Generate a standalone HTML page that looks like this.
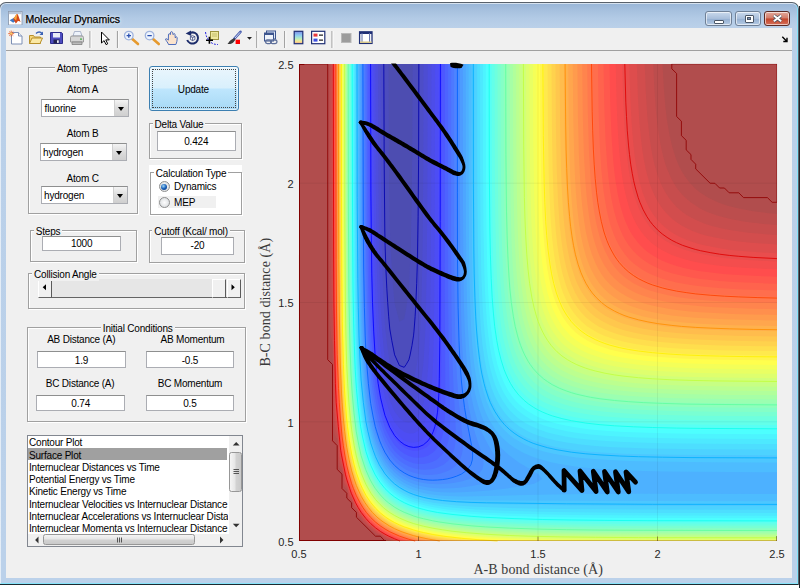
<!DOCTYPE html><html><head><meta charset="utf-8"><title>Molecular Dynamics</title><style>
*{box-sizing:border-box;margin:0;padding:0}
html,body{width:800px;height:588px;overflow:hidden;background:#fff}
body{position:relative;font-family:"Liberation Sans",sans-serif;font-size:10px;letter-spacing:-0.2px;color:#000}
.abs{position:absolute}
#win{position:absolute;left:-1px;top:2px;width:800px;height:583px;border:1px solid #59616b;border-bottom-color:#1c2a30;border-radius:7px 7px 1px 1px;background:linear-gradient(#98b5d7 0px,#a6c0de 7px,#b2cae5 15px,#bad0e9 24px,#bbd1ea 100%);overflow:hidden}
#win:before{content:"";position:absolute;left:0;top:0;right:0;bottom:0;border:1px solid rgba(255,255,255,.6);border-right-color:#86e4fa;border-bottom-color:#86e4fa;border-radius:6px 6px 0 0}
#title{position:absolute;left:25.500px;top:7.600px;font-size:10.5px;letter-spacing:0;line-height:16px;color:#000;-webkit-text-stroke:.25px #000;text-shadow:0 0 5px rgba(255,255,255,.9),0 0 3px rgba(255,255,255,.7)}
#client{position:absolute;left:6px;top:25px;width:786px;height:550px;background:#f0f0f0}
#tb{position:absolute;left:0;top:0;width:786px;height:22.500px;background:#f0f0f0;border-bottom:1px solid #a0a0a0}
.sep{position:absolute;top:4px;width:1px;height:16px;background:#a5a5a5}
.wb{position:absolute;top:7.500px;height:15px;border:1px solid #6f8096;border-radius:3px;box-shadow:inset 0 0 0 1px rgba(255,255,255,.6)}
.panel{position:absolute;border:1px solid #a0a0a0;box-shadow:1px 1px 0 #fff,inset 1px 1px 0 #fff}
.t{position:absolute;line-height:12px;white-space:nowrap}
.lbl{position:absolute;text-align:center;line-height:13px;white-space:nowrap}
.edit{position:absolute;background:#fff;border:1px solid #abadb3;border-top-color:#8e8f8f;text-align:center;white-space:nowrap}
.pop{position:absolute;background:#fff;border:1px solid #abadb3;border-top-color:#8e8f8f;padding-left:4px;white-space:nowrap}
.pop i{position:absolute;right:0;top:0;bottom:0;width:14px;background:linear-gradient(#f4f4f4,#dcdcdc 50%,#cfcfcf);border-left:1px solid #d0d0d0}
.pop i:after{content:"";position:absolute;left:3px;top:7px;border:3.500px solid transparent;border-top:4px solid #000;border-bottom:none}
.radio{position:absolute;border-radius:50%;border:1px solid #8e8f8f;background:radial-gradient(circle at 50% 50%,#fdfdfd 0,#e4e6e8 60%,#cfd3d6 100%)}
.li{position:absolute;left:1px;height:12.36px;line-height:12.36px;white-space:nowrap;padding-left:1px}
</style></head><body><div class="abs" style="left:799px;top:6px;width:1px;height:582px;background:#20242a"></div><div id="win"><svg class="abs" style="left:8px;top:7.500px" width="14.500" height="14.500" viewBox="0 0 16 16"><rect x=".5" y=".5" width="15" height="15" fill="#fff" stroke="#8d9bb0"/><rect x="1" y="1" width="14" height="2.500" fill="#b9c7da"/><path d="M1.800 10.300l4.400-2.500 2.800 2.700-3.300 2.500z" fill="#3f78c4"/><path d="M6.200 7.800c1.700-1.500 2.800-4.600 3.900-4.600 1.300 0 2.700 6.200 3.900 9-1.600-.9-2.800-1.600-3.500-.6-.7.900-1.300 1.700-2 2.200-.6-1.600-1.400-2.700-2.300-3.800z" fill="#d4481a"/><path d="M10.100 3.200c-.9 0-2 3.100-3.900 4.600l2.800 2.700c.5-2.200 1.100-5.300 1.100-7.300z" fill="#f5a83a"/></svg><div id="title">Molecular Dynamics</div><div class="wb" style="left:705px;width:26.500px;background:linear-gradient(#c9d9ec,#a9bfdb 50%,#93aed0 51%,#b5cbe4)"><div class="abs" style="left:8px;top:8px;width:10px;height:4px;background:#fff;border:1px solid #4a5666;border-radius:1px"></div></div><div class="wb" style="left:734.500px;width:26px;background:linear-gradient(#c9d9ec,#a9bfdb 50%,#93aed0 51%,#b5cbe4)"><div class="abs" style="left:9px;top:3px;width:9px;height:8px;background:#fff;border:1px solid #4a5666;border-radius:1px"><div class="abs" style="left:1.500px;top:1.500px;width:4px;height:3px;background:#7d94b5;border:1px solid #4a5666"></div></div></div><div class="wb" style="left:763.500px;width:26.500px;border-color:#5b2b25;background:linear-gradient(#e3a99b,#d27b68 48%,#c2452b 52%,#d6705a)"><svg class="abs" style="left:7.500px;top:2.500px" width="12" height="10"><path d="M1.800 1.500l7.400 5.800M9.200 1.500l-7.400 5.800" stroke="#4a4f5c" stroke-width="3.400"/><path d="M1.800 1.500l7.400 5.800M9.200 1.500l-7.400 5.800" stroke="#fff" stroke-width="2"/></svg></div><div id="client"><svg class="abs" style="left:0;top:0;letter-spacing:0" width="786" height="550" viewBox="6 28 786 550"><g shape-rendering="geometricPrecision"><rect x="299" y="64" width="478" height="477" fill="#4d4db1"/>
<path fill="#4d4dbc" d="M300.2 541l476.8 0 0-477 -364.3 0 -0.4 81.1 -0.6 57.2 -0.9 43 -1.4 33.3 -0.5 8.7 -1.2 10.4 -1.3 9.6 -2.2 11.7 -4.8 2.7 -4.8-18.1 -1.4-15.4 -1.1-14.3 -1.8-33.4 -0.5-14.3 -0.7-47.7 -0.6-114.5 -89.5 0 0 477 1.2 0z"/>
<path fill="#4d4dc7" d="M300.2 541l476.8 0 0-477 -358.3 0 -0.2 86.2 -0.6 66.4 -0.8 47.7 -1.4 38.2 -0.8 14.3 -1.1 14.3 -2.1 14.3 -1.4 7.2 -1.4 6 -2.4 4.2 -2.3 3.5 -4.8-1.6 -4.8-10.9 -2.6-13.1 -2.2-13.1 -2-25.1 -1.7-33.4 -1.1-33.4 -0.7-66.8 -0.4-104.9 -84.9 0 0 477 1.2 0z"/>
<path fill="#4d4dd2" d="M300.2 541l476.8 0 0-477 -353.5 0 -0.2 100.2 -0.6 76.3 -1 52.5 -0.6 19 -1 19.1 -0.9 14.3 -0.9 9.6 -2.2 14.3 -2.1 9.5 -1.9 4.8 -3.2 5.8 -4.7 2.3 -4.8-2.9 -4.8-8.5 -0.4-1.5 -4.4-15.6 -2.6-17.8 -2.2-18.9 -1.1-19.2 -0.9-19.1 -0.7-23.9 -0.7-28.6 -0.7-66.8 -0.4-104.9 -81.5 0 0 477 1.2 0z"/>
<path fill="#4d4dde" d="M300.2 541l476.8 0 0-477 -349.3 0 -0.3 124 -0.6 76.3 -1 52.5 -0.7 19.1 -1.1 19.1 -0.7 9.8 -1.8 14 -1.7 9.6 -1.3 5.3 -0.7 1.8 -3.1 7.2 -1 1.8 -0.5 0.6 -2.6 2.3 -1.7 1.3 -4.7 0.2 -4.8-3.4 -4.8-7.4 -4.8-13.1 -2.3-11 -2.5-13.1 -1.6-15.5 -1.3-14.3 -1.8-30.5 -0.8-26.7 -0.6-28.6 -0.6-71.6 -0.3-109.7 -79 0 0 477 1.2 0z"/>
<path fill="#4d4de9" d="M300.2 541l476.8 0 0-477 -345.5 0 -0.3 133.6 -0.5 81 -0.9 52.5 -0.7 19.1 -0.9 17.9 -1.3 14.3 -1.4 10.7 -1.9 9.6 -1.4 4.7 -2.5 6 -1.2 2.4 -0.9 1.2 -3.9 4 -4.8 1.7 -4.7-1 -4.8-3.6 -4.8-6.6 -4.8-10.9 -2.1-7.5 -2.7-10.8 -2.6-17.8 -2.1-18.5 -1.3-19.6 -1.1-23.9 -0.8-23.9 -0.6-28.6 -0.7-71.5 -0.3-114.5 -76.5 0 0 477 1.2 0z"/>
<path fill="#4d4df4" d="M300.2 541l476.8 0 0-477 -341.9 0 -0.3 143.1 -0.5 90.6 -0.8 52.5 -0.7 19.1 -0.8 14.3 -1.4 14.3 -1.5 9.5 -1 4.8 -0.7 2.4 -2.6 7.2 -1.5 3.1 -1.1 1.6 -3.7 4.2 -4.8 2.5 -4.8 0.3 -4.7-1.6 -4.8-3.6 -4.8-6.1 -4.8-9.5 -4.7-14.8 -1-4.8 -3.4-19.1 -1.6-14.3 -1.6-19 -1.4-23.9 -0.6-14.3 -0.7-28.6 -0.5-33.4 -0.4-42.9 -0.3-133.6 -74.6 0 0 477 1.2 0z"/>
<path fill="#4d4dff" d="M300.2 541l476.8 0 0-477 -338.4 0 -0.3 150.3 -0.4 102.5 -0.6 47.7 -0.4 14.3 -0.7 14.3 -1.3 14.3 -1.4 9.6 -1.9 7.1 -0.7 2.4 -2 4.8 -0.8 1.5 -2.3 3.3 -2.5 2.7 -3.1 2 -1.7 1 -4.8 1 -4.8-0.5 -4.7-1.9 -4.8-3.7 -4.8-5.6 -4.8-8.5 -4.8-12.9 -2.8-11.8 -1.9-9.2 -2.6-19.4 -1.8-19.1 -1-14.3 -1.2-28.6 -0.8-33.4 -0.5-33.4 -0.4-42.9 -0.4-133.6 -72.6 0 0 477 1.2 0z"/>
<path fill="#4d58ff" d="M300.2 541l476.8 0 0-477 -335.2 0 -0.5 295.7 -0.3 28.7 -0.8 19 -0.8 9.6 -1.6 9.5 -1.2 4.8 -0.8 2.4 -0.9 2.4 -2.1 4.1 -2.2 3 -2.1 2.4 -1.6 1.3 -3.6 2.2 -4.8 1.5 -4.8 0.1 -4.8-1 -4.7-2.2 -4.8-3.6 -4.8-5.3 -4.8-7.7 -4.8-11.3 -2.1-7.4 -2.5-9.5 -2.4-14.3 -2.5-18.6 -1.6-19.6 -1.3-23.8 -1-28.7 -0.7-28.6 -0.7-71.5 -0.3-133.6 -70.9 0 0 477 1.2 0z"/>
<path fill="#4d63ff" d="M300.2 541l476.8 0 0-477 -332 0 -0.2 224.2 0.5 104.9 -0.1 14.3 -0.4 10.8 -0.8 8.3 -0.6 4.8 -1 4.8 -1.5 4.7 -2.1 4.5 -1.2 2 -2.4 3.1 -1.2 1.2 -1.3 1.2 -3.6 2.3 -1 0.6 -4.8 1.5 -4.8 0.6 -4.8-0.4 -4.8-1.3 -4.7-2.4 -4.8-3.5 -4.8-5 -4.8-7.2 -4.8-10.1 -4.7-15.3 -3-14.7 -1.8-11.1 -2.3-22.3 -1.7-23.8 -0.8-15.7 -0.9-32 -0.6-38.2 -0.4-42.9 -0.4-147.9 -69.4 0 0 477 1.2 0z"/>
<path fill="#4d6eff" d="M300.2 541l476.8 0 0-477 -328.9 0 0 229 0.6 57.2 1.4 62 0 9.6 -0.4 9.5 -0.5 4.8 -0.6 3.5 -1.5 6 -2 4.8 -3.2 4.7 -4.3 4 -1.2 0.8 -3.6 1.8 -4.7 1.6 -4.8 0.7 -4.8-0.1 -4.8-0.7 -4.8-1.6 -4.7-2.4 -4.8-3.4 -5.3-5.4 -4.3-6.1 -4.8-9.2 -1.4-3.8 -3.3-9.7 -3.3-14.2 -1.8-9.5 -2.4-19.1 -2.1-22.8 -1.2-24.9 -1-28.6 -0.7-38.2 -0.5-47.7 -0.4-152.6 -67.9 0 0 477 1.2 0z"/>
<path fill="#4d79ff" d="M300.2 541l476.8 0 0-477 -325.8 0 -0.1 171.7 0.4 76.3 0.5 32.2 0.8 25.1 0.8 19.1 2.1 38.1 0.1 9.6 -0.2 4.7 -0.6 4.8 -0.6 3 -0.5 1.8 -1.3 3.5 -0.6 1.5 -2.2 3.3 -0.9 1.2 -1.7 1.8 -3.8 3 -5.8 2.8 -4.8 1.4 -2.4 0.4 -2.3 0.3 -4.8 0.1 -4.8-0.4 -4.8-1.1 -4.8-1.6 -4.7-2.5 -4.8-3.4 -4.8-4.6 -4.8-6.2 -4.8-8.5 -4.7-12.2 -2.1-7.4 -2.7-11.4 -2.7-17.3 -2.1-17 -1.5-21.1 -1.4-28.6 -1-33.4 -0.6-33.4 -0.3-38.2 -0.4-157.4 -66.5 0 0 477 1.2 0z"/>
<path fill="#4d84ff" d="M300.2 541l476.8 0 0-477 -322.9 0 0.1 181.3 0.3 47.7 0.5 33.4 0.8 28.6 1.2 22.6 1.8 23.9 3.6 34.6 0.4 9.5 -0.2 4.8 -0.9 4.7 -1.7 4.8 -3.2 4.8 -2.4 2.2 -2.4 1.9 -1.2 0.7 -3.6 1.8 -6 2 -3.6 0.9 -2.4 0.3 -2.4 0.3 -4.7 0.1 -4.8-0.2 -4.8-0.7 -4.8-1.2 -4.8-1.8 -3-1.6 -1.7-0.8 -5.5-3.9 -4.1-3.9 -4.8-5.8 -4.8-8 -4.7-11.1 -2.9-9.4 -1.9-7.2 -2.3-11.9 -1.5-9.5 -1-7 -1.2-12.1 -1.8-23.8 -1.4-28.6 -0.7-23.9 -0.6-38.2 -0.4-47.7 -0.3-152.6 -65.3 0 0 477 1.2 0z"/>
<path fill="#4d8fff" d="M300.2 541l476.8 0 0-477 -319.9 0 0 128.8 0.2 66.8 0.5 47.7 0.9 33.4 1.4 28.6 1.1 13.1 1.1 10.7 1.3 10.8 1.6 10.7 5.6 31 0.6 4.8 0.2 4.7 -0.4 4.8 -1.5 4.8 -3.5 4.7 -4.8 3.6 -2 1.2 -3.9 1.6 -3.5 1.2 -4.8 1.3 -4.8 0.8 -4.8 0.5 -4.8 0.1 -4.7-0.1 -4.8-0.5 -4.8-0.9 -4.8-1.3 -4.8-1.9 -4.7-2.4 -4.8-3.2 -4.8-4.3 -4.8-5.6 -4.8-7.4 -0.8-1.7 -3.9-8.6 -2-5.7 -2.9-9.6 -2.1-9.5 -2.6-14.3 -2.2-19.1 -1.9-23.9 -1.1-19 -1-33.4 -0.7-38.2 -0.4-47.7 -0.4-157.4 -64 0 0 477 1.2 0z"/>
<path fill="#4d9bff" d="M300.2 541l476.8 0 0-477 -317 0 0 133.6 0.3 66.7 0.8 48.9 0.6 21.5 0.9 16.7 1.2 17.9 1.3 13.1 1.5 11.9 2 11.9 2.5 11.9 2.5 9.6 2.1 7.2 6.6 20.2 1 4.8 0.2 4.8 -1.2 4.7 -3.9 4.8 -3.9 2.4 -4.8 2.4 -8.2 2.4 -8.3 1.7 -6 0.7 -9.6 0.4 -4.8-0.1 -4.7-0.3 -4.8-0.8 -4.8-1 -4.8-1.4 -4.8-1.8 -4.7-2.5 -4.8-3.2 -4.8-4.1 -4.8-5.3 -4.8-7 -4.7-9.6 -4.8-13.6 -2.9-11.7 -1.9-9.5 -2.6-19.2 -2.2-22.4 -1.4-25.3 -1.1-33.4 -0.7-38.1 -0.5-47.7 -0.4-162.2 -62.8 0 0 477 1.2 0z"/>
<path fill="#4da6ff" d="M300.2 541l476.8 0 0-477 -314.1 0 0.1 143.1 0.5 71.5 0.5 28.7 0.8 22.6 1.1 20.3 1.2 15.5 1.8 15.5 2.2 14.3 2.8 13.1 2 7.2 1.5 4.8 3.2 8.9 4.7 10.1 4.9 8.9 7.3 11.4 2.6 4.8 1.8 4.7 -0.6 4.8 -2.7 2.9 -2.2 1.9 -5 2.1 -7.2 2.5 -10.7 2.2 -12 1.7 -9.5 0.8 -9.6 0.2 -9.6-0.5 -4.7-0.6 -4.8-0.8 -4.8-1.1 -4.8-1.5 -4.8-1.9 -4.7-2.4 -4.8-3.1 -4.8-4 -4.8-5.1 -4.8-6.6 -4.7-8.9 -4.8-12.5 -2.3-8.2 -2.5-10.8 -2.8-17.8 -2.2-19.1 -1.9-28.6 -1.5-38.2 -0.8-38.2 -0.4-42.9 -0.4-171.7 -61.7 0 0 477 1.2 0z"/>
<path fill="#4db1ff" d="M300.2 541l476.8 0 0-477 -311.2 0 0.1 157.4 0.4 42.9 0.6 33.4 0.9 28.7 1.5 23.8 1.9 19.1 1.2 9.5 1.6 9.6 1.8 8.3 1.5 6 2.1 7.4 2.5 6.9 3 7.1 2.4 4.8 2.9 5 3.9 5.7 3.3 4.1 3.8 4.3 4.5 4.3 4.8 4 8.4 6.1 3.9 2.3 4.4 2.9 3.8 1.8 3.4 2.5 4.3 2.3 1.7 2.5 2 2.3 -3.2 2.1 -5.1 2.7 -12.8 2.4 -14.1 2.3 -18.2 1.9 -13.1 1.1 -14.4 0.8 -9.5 0.2 -9.6-0.3 -9.6-0.8 -9.5-1.6 -4.8-1.1 -4.8-1.5 -4.8-1.9 -4.7-2.4 -5.9-3.9 -3.7-3 -4.8-4.9 -4.8-6.3 -4.7-8.4 -4.8-11.6 -2.6-8.7 -2.2-8.4 -2-10.7 -1.5-9.6 -1.3-9 -1-10 -2-28.7 -1-19 -0.6-19.1 -0.8-38.2 -0.4-47.7 -0.4-171.7 -60.7 0 0 477 1.2 0z"/>
<path fill="#4dbcff" d="M300.2 541l476.8 0 0-47.1 -138.6-0.1 -52.6 0.2 -47.8 0.7 -62.1 1.6 -14.4 0.1 -14.3-0.5 -9.6-0.7 -9.5-1.3 -4.8-1 -4.8-1.3 -4.8-1.5 -4.8-1.9 -4.7-2.4 -4.8-2.9 -4.8-3.7 -4.8-4.7 -4.8-6.1 -5-8.5 -4.5-10.2 -4.2-13.6 -1.2-4.8 -1.9-9.5 -2.3-13.5 -1.7-15.2 -1.2-14.3 -1.3-19.1 -0.9-19 -0.8-28.7 -0.5-28.6 -0.6-81.1 -0.2-138.3 -59.7 0 0 477 1.2 0zM696.9 471.8l80.1 0.4 0-408.2 -308.4 0 0.1 119.2 0.3 66.8 0.9 47.7 0.7 19.1 0.7 14.3 1 14.3 1.5 15.5 1.8 13.1 2.2 12 2.5 10.7 2.7 8.7 3.1 8 4.1 8.2 4.8 7.6 4.8 5.9 3.5 3.7 3.6 3.3 2.4 1.9 4.8 3.5 9.6 5.4 8.3 3.6 6 2.1 11.9 3.4 7.2 1.5 17.9 3 10.8 1.2 14.3 1.2 23.9 1.3 19.2 0.7 23.9 0.6 29.8 0.3z"/>
<path fill="#4dc7ff" d="M300.2 541l476.8 0 0-39.8 -129.1-0.1 -157.7-0.7 -23.9-0.3 -14.3-0.6 -9.6-0.8 -9.6-1.2 -9.5-1.9 -4.8-1.2 -4.8-1.5 -4.8-2 -4.7-2.3 -4.8-2.9 -4.8-3.6 -4.8-4.6 -4.8-5.8 -4.7-7.5 -4.8-10.1 -4.8-14.5 -2.9-13.1 -1.9-9.7 -2.3-18.9 -1.8-19.1 -1.2-19.1 -0.9-23.8 -0.8-28.6 -0.5-28.7 -0.5-81 -0.2-133.6 -58.7 0 0 477 1.2 0zM711.3 462.3l65.7 0.2 0-398.5 -305.5 0 0.1 114.5 0.3 66.8 0.9 47.7 0.7 19 0.9 16.7 1.3 16.7 1.6 14.3 1.8 12 2.1 10.7 2.7 10.7 2.8 8.4 3.5 8.2 3.9 7.3 4.9 7.1 5.2 6 5.1 4.6 4.8 3.7 2 1.2 7.6 4.4 9.5 4.1 9.6 3.1 9.5 2.3 14.4 2.6 9.5 1.3 14.4 1.4 19.1 1.3 19.1 0.8 23.9 0.7 58.6 0.7z"/>
<path fill="#4dd2ff" d="M300.2 541l476.8 0 0-34.9 -124.3-0.2 -81.2-0.5 -76.5-1.2 -23.9-0.7 -14.4-0.7 -14.3-1.3 -9.6-1.3 -9.5-1.9 -4.8-1.3 -4.8-1.6 -5.3-2.1 -4.2-2.1 -4.8-2.8 -4.8-3.6 -4.8-4.4 -1.3-1.4 -4-4.8 -4.2-6.5 -1.6-3 -3.2-6.5 -4.8-13.5 -3.3-13.4 -1.9-9.5 -2.6-19.1 -1.8-17.6 -1.2-20.6 -1.1-23.8 -0.8-28.7 -0.5-28.6 -0.6-81.1 -0.3-138.3 -57.6 0 0 477 1.2 0zM702.9 455.1l74.1 0.3 0-391.4 -302.7 0 0.1 114.5 0.4 62 0.9 47.7 0.7 19.1 0.8 14.3 1 14.3 1.5 14.3 1.8 13.1 1.9 10.7 2.3 9.6 2.9 9.5 3.3 8.4 3.6 7.1 4.3 6.8 5.1 6.4 3.5 3.5 2.7 2.4 3 2.4 4.8 3.3 7.2 4 7.1 3.1 9.6 3.3 9.5 2.4 9.6 2 11.9 1.7 16.8 1.8 14.3 1.1 19.1 0.9 19.2 0.6 28.6 0.5 31.1 0.3z"/>
<path fill="#4ddeff" d="M300.2 541l476.8 0 0-31.2 -133.8-0.2 -81.3-0.6 -33.5-0.6 -32.1-0.8 -20.4-0.9 -19.2-1.2 -14.3-1.4 -9.6-1.4 -9.5-2 -9.6-2.8 -4.8-2 -4.7-2.2 -4.8-2.8 -4.8-3.4 -4.2-3.7 -4.4-4.8 -1-1.1 -4.7-6.9 -4.8-9.1 -4.5-11.5 -1.4-4.8 -3.5-14.3 -1.7-9.5 -2.6-19.1 -0.7-5.7 -1.1-13.4 -1.1-19.1 -1.1-23.8 -0.8-28.7 -0.5-28.6 -0.5-76.3 -0.2-143.1 -56.8 0 0 477 1.2 0zM702.9 449.2l74.1 0.3 0-385.5 -299.8 0 0.1 109.7 0.4 62 0.9 47.7 0.7 19.1 0.9 15.5 0.9 13.1 1.5 14.3 2 14.3 1.8 9.6 2.3 9.5 3 9.6 3.3 8.2 4.4 8.5 5.1 7.4 4.8 5.4 5.6 5 4 3 2.8 1.8 6.7 3.8 4.8 2.2 4.8 1.8 9.6 3 8.3 2 10.8 2.1 11.9 1.7 16.8 1.6 14.3 1 19.1 0.9 19.1 0.6 55 0.8z"/>
<path fill="#4de9ff" d="M300.2 541l476.8 0 0-27.9 -129.1-0.2 -76.4-0.6 -33.5-0.6 -33.5-1 -28.6-1.3 -19.2-1.3 -14.3-1.6 -14.3-2.4 -4.8-1.1 -4.8-1.3 -9.6-3.4 -4.7-2.3 -4.8-2.7 -4.8-3.4 -4.8-4.1 -4.8-5.2 -4.7-6.5 -4.8-8.6 -4.8-11.8 -3.7-12.9 -1.1-4.4 -1-5.1 -3.1-19.1 -1.1-9.5 -1.6-19.1 -1.2-19.1 -1.1-23.8 -0.5-19.1 -0.6-33.4 -0.6-81.1 -0.2-143.1 -55.9 0 0 477 1.2 0zM662.3 443.2l47.8 0.6 66.9 0.3 0-380.1 -296.9 0 0.1 104.9 0.3 62.1 0.8 42.9 1.4 33.4 0.9 14.3 1.4 14.3 1.6 13.2 1.8 10.6 2 9.6 2.7 9.5 2.4 7.2 3.1 7.1 2.4 4.5 2.3 3.9 4.2 5.9 1.8 2.3 3.6 3.7 5.4 4.8 6.6 4.5 3.5 2 4.8 2.4 6 2.5 8.4 2.8 9.5 2.4 9.6 1.9 9.5 1.5 14.4 1.6 15.5 1.3 17.9 1 38.3 1.1z"/>
<path fill="#4df4ff" d="M300.2 541l476.8 0 0-25.2 -129.1-0.2 -76.4-0.6 -33.5-0.7 -28.7-0.8 -26.4-1.1 -16.6-1.2 -19.1-1.8 -12.4-1.8 -11.5-2.5 -9.6-2.8 -4.8-1.9 -4.7-2.2 -4.8-2.7 -4.8-3.2 -4.5-3.8 -5.1-5.2 -4.7-6.3 -4.8-8.2 -4.8-11.2 -2.3-7.2 -2.5-8.8 -2.9-15.1 -1.9-11.3 -1.8-17.3 -1.2-14.3 -1.2-19.1 -0.8-19.1 -0.8-28.6 -0.4-28.6 -0.6-81.1 -0.2-143.1 -55.1 0 0 477 1.2 0zM683.8 438.5l40.6 0.3 52.6 0.2 0-375 -294.1 0 0.1 100.2 0.4 63.2 1 46.5 0.7 19.1 0.8 14.3 1 14.3 1.5 14.3 1.8 13 2 10.8 2.4 9.6 2.8 8.9 2.4 6.2 3.6 7.5 1.3 2.4 3.1 4.8 1.7 2.4 3 3.6 2.2 2.3 3.8 3.6 5.2 4.1 5.9 3.7 3.6 1.9 4.8 2.3 4.8 1.9 4.8 1.6 8.3 2.3 10.8 2.4 9.5 1.6 14.4 1.7 14.3 1.2 14.4 0.9 19.1 0.9 45.4 1z"/>
<path fill="#4dffff" d="M300.2 541l476.8 0 0-22.7 -138.6-0.3 -43-0.2 -38.3-0.5 -28.7-0.7 -23.9-0.9 -23.9-1.3 -19.1-1.3 -14.3-1.6 -14.4-2.2 -9.5-2.1 -9.6-2.9 -4.8-1.8 -4.7-2.2 -4.8-2.6 -6.3-4.4 -3.3-2.7 -4.8-4.8 -5.2-6.8 -4.3-7.1 -1.2-2.5 -3.6-8.1 -2.1-6.2 -2.7-8.8 -2.3-10.2 -2.6-14.3 -2.2-19.1 -1.7-19.1 -0.9-14.3 -1.1-28.6 -0.7-28.7 -0.4-28.6 -0.6-81.1 -0.2-138.3 -54.2 0 0 477 1.2 0zM689.8 433.7l87.2 0.5 0-370.2 -291.2 0 0.1 100.2 0.5 62 0.9 42.9 0.7 19.1 0.8 14.3 1 14.3 1.5 14.3 2 14.3 1.8 9.6 2.3 9.5 3 9.5 3.5 8.4 3 6 2.4 4 2.2 3.1 2.6 3.4 2.3 2.6 2.5 2.5 3.6 3.2 5.1 3.8 5.9 3.6 4.5 2.3 4.8 2.1 8.3 2.9 7.2 2 8.4 1.9 14.3 2.4 9.6 1.2 14.3 1.3 19.1 1.2 16.8 0.7 21.5 0.6 27.5 0.5z"/>
<path fill="#58fff4" d="M300.2 541l476.8 0 0-20.5 -129.1-0.2 -76.4-0.6 -28.7-0.6 -28.7-0.8 -25.6-1.1 -17.4-1.3 -19.1-1.8 -13-1.7 -10.9-2.1 -10.4-2.7 -8.8-3.1 -4.7-2.2 -4.8-2.6 -4.8-3.1 -4.3-3.3 -5.3-5.1 -4.7-5.9 -5.1-8.1 -4.5-9.4 -4.8-14.1 -3.4-14.6 -1.7-9.6 -2.5-19.1 -1.9-21.1 -1.2-21.8 -0.9-23.8 -0.7-28.7 -0.5-28.6 -0.5-81.1 -0.2-138.3 -53.4 0 0 477 1.2 0zM682.6 428.9l41.8 0.4 52.6 0.3 0-365.6 -288.3 0 0.2 100.2 0.4 57.2 0.9 42.9 0.7 19.1 0.8 14.3 1 14.3 1.5 14.4 1.8 13.1 2 10.7 2.3 9.5 3 9.6 2.4 6.2 3.6 7.4 4.8 7.6 4 5 5.6 5.6 4.7 3.9 6 3.9 3.6 1.9 4.8 2.3 4.8 2 4.7 1.7 7.2 2.1 10.8 2.4 10.7 1.9 9.6 1.2 14.3 1.5 14.4 1 19.1 0.9 19.1 0.6 25.1 0.5z"/>
<path fill="#63ffe9" d="M300.2 541l476.8 0 0-18.4 -133.8-0.2 -71.7-0.6 -28.7-0.6 -28.7-0.9 -23.9-1.1 -23.9-1.7 -9.6-0.9 -9.5-1.2 -14.4-2.3 -9.5-2.1 -9.6-2.8 -4.8-1.8 -4.7-2.2 -4.8-2.5 -5.6-3.6 -4-3.1 -4.8-4.6 -4.7-5.6 -4.8-7.3 -4.8-9.5 -4.8-13.3 -3.4-13.9 -1.9-9.5 -2.1-14.3 -2.1-19.3 -1.3-18.9 -1.2-23.8 -0.9-28.6 -0.6-33.4 -0.6-81.1 -0.3-147.9 -52.5 0 0 477 1.2 0zM670.6 424.2l44.3 0.6 62.1 0.3 0-361.1 -285.4 0 0.2 95.4 0.4 57.2 0.9 43 0.7 19 0.8 14.4 1 14.3 1.1 10.7 1.6 13.1 1.6 9.6 2 9.5 2.6 9.5 3 8.4 2.5 5.9 4.1 7.6 4.7 6.8 4.9 5.5 4.7 4.3 6.2 4.5 3.4 2.1 4.8 2.5 6 2.6 8.3 2.9 9.6 2.6 9.5 2 9.6 1.6 14.3 1.7 14.4 1.2 14.3 0.8 19.1 0.9 22.7 0.6z"/>
<path fill="#6effde" d="M300.2 541l476.8 0 0-16.6 -148.2-0.2 -43-0.4 -38.2-0.6 -28.7-0.8 -23.9-1 -23.9-1.7 -14.4-1.3 -9.5-1.1 -14.4-2.4 -9.5-2.1 -4.8-1.3 -9.6-3.3 -4.7-2.1 -4.8-2.5 -4.8-3 -4.8-3.6 -4.8-4.4 -4.7-5.5 -5.5-8.1 -4.1-8 -4.8-12.5 -3.4-12.9 -2-9.5 -2.9-19.1 -1.2-10 -0.8-9.1 -1.4-19.1 -1.1-23.8 -0.9-28.6 -0.6-32.1 -0.6-82.4 -0.2-147.9 -51.8 0 0 477 1.2 0zM749.5 420.6l27.5 0.1 0-356.7 -282.4 0 0.2 100.2 0.5 57.2 1.1 42.9 0.8 19.1 1 14.3 1.2 14.3 1.8 14.4 1.6 9.5 2.3 10.7 2.3 8.4 1.5 4.7 1.8 4.8 3.4 7.5 4.8 8.1 4.8 6.2 4.7 5 3.6 3 3.2 2.4 2.8 1.9 4.8 2.8 4.8 2.3 4.7 2.1 7.2 2.5 10.8 2.9 10.7 2.1 9.6 1.5 14.3 1.6 14.4 1.2 19.1 1.1 19.1 0.7 23.9 0.5 68.1 0.7z"/>
<path fill="#79ffd2" d="M300.2 541l476.8 0 0-14.7 -143.4-0.3 -43-0.3 -38.3-0.6 -33.4-1 -28.7-1.3 -19.1-1.3 -19.1-2 -14.4-2 -9.5-1.9 -9.6-2.4 -4.8-1.5 -4.8-1.8 -5.3-2.3 -4.2-2.2 -4.8-2.9 -4.8-3.5 -6.1-5.7 -4.1-4.8 -4.1-5.8 -2.1-3.7 -2.7-5.1 -3.8-9.2 -1.6-4.8 -4.2-15.4 -2.4-13.2 -2.3-16.3 -1.6-17.1 -1.4-19.1 -1.1-23.8 -0.7-20.2 -0.6-32.3 -0.7-85.9 -0.2-152.6 -51.1 0 0 477 1.2 0zM696.9 415.8l80.1 0.5 0-352.3 -279.5 0 0.2 90.6 0.5 57.3 0.9 42.9 0.8 19.1 0.9 14.3 1.1 14.3 1.6 14.3 1.4 9.6 2.3 11.9 2.1 8.8 2.5 7.9 3.2 8.3 3.9 7.7 4.8 7.3 4.4 5.3 5.1 4.9 6 4.6 3.6 2.3 3.6 2 5.9 2.8 4.8 1.9 4.8 1.7 9.6 2.6 9.5 2.1 10.8 1.7 13.1 1.6 14.4 1.3 14.3 0.9 19.1 0.8 44.2 1z"/>
<path fill="#84ffc7" d="M300.2 541l476.8 0 0-13.1 -143.4-0.2 -43-0.3 -38.3-0.6 -28.6-0.8 -23.9-1 -23.9-1.5 -19.2-1.7 -14.3-2 -14.3-2.5 -9.6-2.5 -4.8-1.5 -4.8-1.7 -8.7-4 -5.6-3.3 -4.8-3.5 -3.2-2.7 -4.8-4.8 -1.5-1.8 -4.8-6.5 -4.8-8.4 -4.8-11.3 -3.1-10.2 -2.4-9.5 -1.8-9.5 -1.6-9.6 -1.7-14.3 -1.7-19.1 -1.3-19.1 -0.8-19 -0.8-28.6 -0.5-28.7 -0.6-81.1 -0.2-152.6 -50.4 0 0 477 1.2 0zM673 411l41.9 0.7 62.1 0.4 0-348.1 -276.5 0 0.2 85.9 0.5 57.2 0.9 42.9 1.4 29.8 1 13.2 1.4 14.3 1.6 11.9 1.8 10.8 2.5 10.7 2.3 8 2.3 6.3 3.1 7.1 4.2 7.5 4.7 6.7 4.8 5.2 4.8 4.2 5.3 3.9 4.3 2.5 3.5 1.9 6 2.7 9.6 3.3 9.5 2.6 9.6 1.9 9.6 1.5 14.3 1.7 14.3 1.2 14.4 0.9 34.6 1.2z"/>
<path fill="#8fffbc" d="M300.2 541l476.8 0 0-11.5 -143.4-0.3 -43-0.3 -38.3-0.6 -28.6-0.7 -23.9-0.9 -23.9-1.6 -23.9-2.4 -6.4-0.8 -8-1.3 -14.3-2.9 -9.6-2.8 -6.8-2.5 -2.7-1.2 -7-3.6 -7.2-4.8 -5-4.2 -4.7-5 -4.8-6.3 -4.9-8.3 -4.7-10.6 -2.7-8.5 -2.1-7 -2.5-12.1 -2.2-12.5 -2-16.1 -1.7-19.1 -1.1-17.8 -0.8-20.3 -0.8-28.6 -0.6-33.4 -0.5-81.1 -0.2-147.9 -49.7 0 0 477 1.2 0zM716.1 407.5l60.9 0.3 0-343.8 -273.4 0 0.2 90.6 0.5 57.3 1 38.1 0.9 19.1 0.9 14.3 1.2 14.3 1.6 13.1 1.7 10.8 2.2 10.7 2.2 8.4 3.2 9.5 2 4.8 2.3 4.7 2.7 4.8 4.1 6 2.9 3.5 2.4 2.5 2.4 2.4 4.2 3.5 5.4 3.7 5.9 3.3 8.4 3.7 9.6 3.2 9.5 2.4 9.6 1.9 10.7 1.6 13.2 1.5 14.3 1.1 19.1 1.1 19.2 0.7 49 0.9z"/>
<path fill="#9bffb1" d="M300.2 541l476.8 0 0-10 -143.4-0.2 -43-0.4 -33.5-0.4 -33.4-0.9 -28.7-1.2 -19.1-1.3 -19.2-1.8 -14.3-1.9 -9.6-1.6 -14.3-3.4 -4.8-1.5 -4.8-1.7 -5.6-2.3 -3.9-2 -5-2.8 -6.5-4.8 -2.9-2.4 -4.7-4.9 -5.4-7 -4.2-6.9 -1.3-2.6 -3.5-7.7 -2.3-6.6 -2.5-8 -2.5-11.1 -2.6-14.3 -2.4-19.1 -1.7-19.1 -1.1-19.1 -0.9-23.8 -0.7-28.6 -0.5-28.6 -0.5-81.1 -0.2-147.9 -49 0 0 477 1.2 0zM683.8 402.7l40.6 0.6 52.6 0.3 0-339.6 -270.4 0 0.2 85.9 0.5 52.4 0.9 38.2 0.8 19.1 0.8 14.3 1.1 14.3 1.4 13.1 1.5 10.7 1.7 9.6 2.1 9.5 2.8 9.6 3.3 8.7 2.6 5.6 2.6 4.7 4.3 6.4 4.8 5.6 5.1 4.7 3.3 2.5 3.3 2.3 2.6 1.7 4.8 2.5 6.6 3 7.8 2.7 9.5 2.7 9.6 2 9.5 1.6 14.4 1.7 14.3 1.3 14.4 0.9 19.1 0.8 21.5 0.6z"/>
<path fill="#a6ffa6" d="M300.2 541l476.8 0 0-8.6 -143.4-0.2 -43-0.3 -34-0.4 -28.2-0.8 -23.9-0.9 -23.9-1.4 -20.1-1.7 -13.3-1.7 -14.4-2.3 -9.5-2.1 -11.8-3.4 -7.3-2.9 -4.1-1.9 -5.5-3.1 -4.8-3.2 -4-3.3 -5.5-5.3 -4.8-6 -4.9-7.7 -4.7-9.7 -4.8-13.9 -3.4-14.6 -1.8-9.5 -2.5-19.1 -1.8-18.1 -1.2-20.1 -1.1-23.8 -0.7-28.6 -0.5-28.7 -0.6-81.1 -0.2-152.6 -48.3 0 0 477 1.2 0zM726.8 399.1l50.2 0.3 0-335.4 -267.3 0 0.3 85.9 0.6 57.2 1.1 38.2 0.9 19 1 14.3 1.3 14.4 1.7 13.1 1.9 10.7 2.1 9.6 2.7 9.5 3.1 8.3 2.7 6 4.1 7.2 4.8 6.6 4.8 5.1 5.8 4.9 3.7 2.7 3.5 2.1 6.1 3.2 4.8 2.1 4.8 1.8 9.5 2.9 7.2 1.7 11.9 2.2 9.6 1.3 14.3 1.5 14.4 1.1 19.1 1 19.1 0.6 50.2 0.9z"/>
<path fill="#b1ff9b" d="M300.2 541l476.8 0 0-7.3 -143.4-0.2 -43-0.3 -38.3-0.5 -28.6-0.7 -23.9-1 -23.9-1.6 -19.2-1.8 -14.3-1.9 -14.3-2.6 -9.6-2.4 -9.6-3 -4.7-2 -4.8-2.2 -4.8-2.7 -4.8-3.1 -4.8-3.8 -4.7-4.6 -5-6 -4.6-7.1 -1.3-2.4 -3.5-7.2 -4.8-13.1 -3.3-13.1 -1.9-9.6 -2.8-19 -1.9-19.1 -1.3-19.1 -1.1-23.9 -0.8-28.6 -0.6-33.4 -0.6-76.3 -0.2-157.4 -47.6 0 0 477 1.2 0zM692.2 394.3l37 0.6 47.8 0.3 0-331.2 -264.1 0 0.2 81.1 0.5 52.5 1 38.1 0.8 19.1 0.9 14.3 1.2 14.3 1.4 12 1.8 11.9 1.8 9.5 2.4 9.6 2.6 8.3 2.3 6 3.4 7.1 4.4 7.2 4 5.2 5.2 5.5 5.5 4.6 5.7 3.7 3.9 2.3 4.8 2.3 6.6 2.6 7.7 2.5 9.6 2.4 9.5 1.9 9.6 1.4 14.3 1.6 14.4 1.2 14.3 0.8 19.1 0.8 20.4 0.5z"/>
<path fill="#bcff8f" d="M300.2 541l476.8 0 0-5.9 -143.4-0.3 -43-0.3 -33.5-0.4 -28.7-0.7 -28.6-1.1 -19.2-1.2 -19.1-1.7 -19.1-2.3 -9.6-1.7 -14.3-3.3 -9.6-3.1 -4.9-1.8 -9.4-4.8 -7-4.8 -2.6-2.1 -4.7-4.5 -4.8-5.6 -4.8-7 -4.8-9.2 -4.8-12.6 -1.8-6.7 -2.4-9.5 -1.8-9.6 -2.8-19 -0.7-6.3 -1.1-12.8 -1.3-19.1 -1.1-23.9 -0.7-23.8 -0.6-28.6 -0.6-85.9 -0.2-157.4 -47 0 0 477 1.2 0zM740 390.8l37 0.2 0-327 -260.9 0 0.3 85.9 0.6 52.4 0.6 23.9 0.8 19.1 0.8 14.3 1 14.3 1.5 14.3 2 13.7 1.9 10.1 2.3 9.6 2.6 8.3 2.7 7 4.2 8.5 3 4.8 3.5 4.8 3.7 4.1 1.9 1.8 2.8 2.6 2.8 2.2 6.8 4.6 7.4 3.7 6.9 2.9 9.6 3 9.6 2.3 9.5 1.8 14.4 2 14.3 1.4 14.3 1 19.2 0.9 19.1 0.6 53.8 0.9z"/>
<path fill="#c7ff84" d="M300.2 541l476.8 0 0-4.6 -133.8-0.2 -76.5-0.7 -28.7-0.6 -28.7-1 -23.9-1.2 -19.1-1.5 -19.1-2.2 -14.4-2.3 -9.5-2.1 -10-2.7 -9.1-3.4 -4.8-2.1 -4.8-2.6 -4.8-3 -4.2-3.2 -5.3-4.8 -4.8-5.5 -2.9-4 -3-4.8 -3.7-7 -4.8-12.1 -2.7-9.5 -2-8 -2.1-11.1 -2.7-18.6 -1.8-19.5 -1.3-19.1 -1.1-23.9 -0.6-19 -0.6-33.4 -0.6-85.9 -0.2-157.4 -46.4 0 0 477 1.2 0zM702.9 386l31.1 0.4 43 0.3 0-322.7 -257.7 0 0.3 76.3 0.6 52.5 1 38.2 0.9 19 0.9 14.3 1.2 13.2 1.3 10.7 1.4 9.5 2.1 10.8 2 8.3 3 9.6 3.9 9.5 2.5 4.8 2.9 4.7 4.4 6 4.6 5 3.8 3.3 3.4 2.6 2.4 1.7 3.6 2.2 6 3.1 4.7 2.1 4.8 1.8 8.4 2.6 10.7 2.5 9.6 1.7 9.6 1.4 14.3 1.5 14.3 1.1 14.4 0.7 19.1 0.8 21.5 0.5z"/>
<path fill="#d2ff79" d="M300.2 541l476.8 0 0-3.5 -143.4-0.2 -76.5-0.7 -23.9-0.5 -28.7-1.1 -23.9-1.4 -19.1-1.6 -9.5-1.1 -9.6-1.4 -14.3-2.5 -9.6-2.3 -9.6-3 -9.5-4 -4.8-2.5 -4.6-2.8 -5-3.7 -4.7-4.3 -1.5-1.6 -3.3-3.7 -4.2-5.8 -5.4-9.4 -4.8-11.7 -2.3-7.5 -2.5-9.6 -1.9-9.5 -1.7-9.5 -1.9-14.3 -1.7-19.1 -1.3-19.1 -1-21.5 -0.7-26.2 -0.6-33.4 -0.6-85.9 -0.1-152.6 -45.8 0 0 477 1.2 0zM765.1 382.4l11.9 0.1 0-318.5 -254.4 0 0.3 81.1 0.7 52.5 1.3 38.1 1.1 19.1 1.1 14.3 1.6 14.3 2.1 13.1 2.2 10.8 2.6 9.5 3.3 9.6 3.3 7.1 4.1 7.2 3.4 4.7 4.1 4.8 3.3 3.3 3.2 2.7 6.4 4.5 6.9 3.8 7.4 3.2 9.6 3.2 9.5 2.5 9.6 1.8 9.6 1.5 14.3 1.6 14.3 1.2 19.2 1.1 19.1 0.7 22.7 0.5 56.2 0.6z"/>
<path fill="#deff6e" d="M300.2 541l476.8 0 0-2.3 -138.6-0.2 -76.5-0.7 -28.7-0.6 -28.4-1 -19.4-1.1 -19.1-1.5 -19.1-2.1 -14.4-2.4 -11.5-2.4 -12.4-3.7 -4.7-1.8 -4.8-2.2 -4.8-2.4 -4.8-3 -4.8-3.5 -2.9-2.5 -4.8-4.8 -1.8-2 -4.8-6.5 -4.8-8.3 -4.8-11.1 -3.2-10.2 -1.5-5.6 -0.9-4 -1.9-9.5 -1.7-9.5 -1.7-14.3 -1.8-19.1 -1.3-19.1 -0.8-19.1 -0.8-28.6 -0.6-33.4 -0.6-85.9 -0.2-152.6 -45.1 0 0 477 1.2 0zM720.8 377.6l56.2 0.6 0-314.2 -251 0 0.3 76.3 0.7 52.5 1.2 38.2 0.8 14.3 1 14.3 1.5 14.3 1.7 12.9 2 10.9 2.2 9.6 3 9.5 2.4 6.4 3.8 7.9 2.8 4.8 3.3 4.8 4.4 5.2 4.8 4.5 4.8 3.7 2.4 1.6 6.9 4 6.2 2.8 8.4 3.1 9.5 2.7 9.6 2 10.8 1.8 13.1 1.6 14.3 1.3 14.4 0.9 19.1 0.8 39.4 0.9z"/>
<path fill="#e9ff63" d="M300.2 541l476.8 0 0-1.2 -148.2-0.2 -43-0.4 -33.5-0.5 -28.6-0.7 -23.9-0.9 -15.6-0.9 -17.9-1.4 -14.3-1.6 -14.4-2 -9.5-1.8 -9.6-2.2 -9.6-3 -4.7-1.8 -4.8-2.1 -4.8-2.4 -4.8-2.9 -4.8-3.4 -4.6-4 -4.6-4.8 -5.1-6.7 -4.8-8 -4.8-10.7 -2.6-8 -2.1-7.1 -2.7-11.9 -2.5-14.3 -2.2-19.1 -1.6-19.1 -1.1-19.1 -0.9-23.8 -0.7-28.6 -0.4-28.7 -0.6-81.1 -0.2-152.6 -44.5 0 0 477 1.2 0zM701.7 372.9l32.3 0.5 43 0.4 0-309.8 -247.6 0 0.3 71.5 0.6 47.7 1.1 38.2 0.8 15.5 1 15.7 1.1 11.7 1.8 14.3 1.5 9.6 2 9.5 2.5 9.6 1.9 5.7 3.4 8.6 3 5.9 2.9 4.8 4.4 6 4.2 4.6 2.7 2.5 3.3 2.7 3.6 2.6 2.3 1.5 7.2 3.9 7.2 3.1 7.2 2.5 9.5 2.6 9.6 1.9 9.5 1.6 12.4 1.5 16.3 1.4 14.4 0.9 34.6 1.3z"/>
<path fill="#f4ff58" d="M300.2 541l476.8 0 -138.6-0.3 -71.7-0.6 -28.7-0.6 -23.9-0.7 -23.9-1.2 -20.6-1.4 -17.6-1.9 -19.2-2.8 -14.3-3.2 -4.8-1.3 -4.8-1.6 -9.5-3.8 -4.8-2.4 -4.8-2.8 -4.8-3.4 -4.7-4 -4.8-5 -4.8-6.1 -2.9-4.6 -2.7-4.8 -4.3-9.5 -4.4-13.6 -2.5-10.3 -2.7-14.3 -2.4-19 -2-22.1 -1.1-20.9 -0.9-23.8 -0.7-28.6 -0.4-28.7 -0.6-81.1 -0.2-152.6 -43.9 0 0 477 1.2 0zM759.1 369.3l17.9 0.1 0-305.4 -244.1 0 0.3 76.3 0.9 52.5 0.6 19.1 0.9 19.1 0.9 14.3 1.2 14.3 1.8 14.3 1.6 9.5 1.9 9.6 2.5 9.5 3.2 9.5 3.2 7.2 3.9 7.2 3.2 4.7 3.9 4.8 4.8 4.8 6 4.7 7.3 4.6 7.2 3.4 7.2 2.7 9.5 2.9 9.6 2.2 9.5 1.6 14.4 1.9 14.3 1.4 14.4 0.9 19.1 0.9 19.1 0.6 53.8 0.8z"/>
<path fill="#ffff4d" d="M300.2 541l253.1 0 -29.6-0.8 -23.9-1 -19.2-1.1 -19.1-1.6 -14.3-1.7 -14.4-2.2 -9.5-2 -9.6-2.5 -4.8-1.5 -4.7-1.8 -6.7-2.9 -7.7-4.2 -4.8-3.3 -2.4-2 -2.3-2 -4.8-4.8 -4.8-6 -4.8-7.6 -4-8.2 -1.9-4.8 -3.6-10.7 -3.2-13.2 -1.9-9.5 -2.1-14.3 -2-19.1 -1.1-14.3 -1-19.1 -0.8-19.1 -0.6-23.8 -0.8-57.3 -0.4-81 -0.2-133.6 -43.3 0 0 477 1.2 0zM734 364.5l43 0.4 0-300.9 -240.6 0 0.4 71.5 0.7 47.7 0.5 19.1 0.8 19.1 0.9 14.3 1.1 14.3 1.6 14.3 1.3 9.6 1.8 9.5 2.1 9.6 2.9 9.5 2.6 7.2 3.4 7.1 4.2 7.1 1.6 2.5 3.9 4.7 4.7 4.8 5.3 4.4 4.8 3.2 4.8 2.7 4.8 2.2 4.2 1.8 6.5 2.3 8.9 2.5 9.1 1.9 14.3 2.4 9.6 1.1 14.3 1.3 14.3 0.9 19.2 0.9 43 1z"/>
<path fill="#fff44d" d="M300.2 541l214.9 0 -20.1-1 -19.1-1.2 -14.4-1.2 -14.3-1.7 -14.4-2.3 -9.5-1.9 -9.6-2.5 -9.5-3.2 -9.2-4.1 -5.2-3 -4.8-3.2 -4.1-3.3 -5-4.8 -5.2-6.3 -4.8-7.4 -4.8-9.6 -2-5.3 -2.7-8 -2.9-11.1 -2.1-9.5 -2.2-14.3 -1.8-14.3 -0.9-9.6 -1.3-19.1 -0.9-19.1 -1.3-42.9 -0.8-57.2 -0.3-71.6 -0.1-138.3 -42.8 0 0 477 1.2 0zM722 359.7l55 0.7 0-296.4 -236.9 0 0.3 66.8 0.7 47.7 0.6 19.1 0.7 19 0.9 14.4 1.1 14.3 1.6 14.3 1.3 9.5 1.8 9.5 2.1 9.6 2.4 8.3 2.6 7.2 3.3 7.4 3.1 5.7 4.1 6 4.8 5.6 4.7 4.5 4.8 3.7 6.6 4.1 7.8 3.7 5.6 2.2 8.7 2.8 9.6 2.3 9.5 1.8 10 1.5 13.9 1.5 14.4 1.1 14.3 0.8 19.1 0.8 21.5 0.5z"/>
<path fill="#ffe94d" d="M300.2 541l192.8 0 -17.1-1.2 -19.2-1.7 -14.3-1.8 -9.6-1.6 -9.5-1.9 -9.6-2.5 -9.5-3.2 -4.8-2 -4.8-2.2 -4.8-2.8 -4.6-2.9 -4.9-4 -4.8-4.6 -4.8-5.7 -4.8-7.2 -3.7-7.2 -2.1-4.7 -3.7-10.1 -2.5-9 -2.3-9.8 -2.4-14.1 -1.9-14.3 -1.4-14.3 -1-14.3 -1.6-33.4 -1.1-42.9 -0.5-47.7 -0.3-76.3 -0.2-133.6 -42.2 0 0 477 1.2 0zM718.4 355l58.6 0.8 0-291.8 -233.2 0 0.4 66.8 0.8 47.7 1.2 33.4 0.8 14.3 1.1 14.3 1.6 14.3 1.3 9.5 1.7 9.6 2.2 9.5 2.2 7.9 2.3 6.4 2.5 6.1 4.3 8.2 5 7.2 4.2 4.8 5.6 5.1 4.8 3.6 5.2 3.2 4.4 2.2 4.7 2.2 6 2.2 8.4 2.6 9.5 2.2 9.6 1.8 9.6 1.4 10.7 1.1 13.2 1.2 14.3 0.9 19.1 0.8 17.9 0.5z"/>
<path fill="#ffde4d" d="M300.2 541l177.3 0 -16-1.4 -14.3-1.7 -11.8-1.7 -12.1-2.4 -9.6-2.4 -9.5-3.2 -4.8-1.9 -8.7-4.4 -5.7-3.7 -4.7-3.7 -4.8-4.5 -4.8-5.6 -4.8-7 -4.7-8.9 -3.8-9.5 -1.6-4.8 -2.7-9.5 -2.1-9.6 -2.5-14.3 -1.7-12.8 -1.5-15.8 -1-14.3 -1.6-33.4 -1-38.1 -0.6-57.3 -0.3-76.3 -0.1-128.8 -41.7 0 0 477 1.2 0zM717.2 350.2l26.3 0.5 33.5 0.4 0-287.1 -229.4 0 0.3 62 0.8 47.7 1.3 33.4 0.8 14.3 1.1 14.3 1.4 13.1 1.5 10.8 1.7 9.5 2.2 9.5 2.7 9.6 1.7 4.8 3.6 8.2 3.3 6.1 3.2 4.7 3.7 4.8 4.6 4.8 5.8 4.8 3.3 2.2 4.1 2.5 5.4 2.8 4.8 2.1 9.6 3.3 9.5 2.5 9.6 2 9.6 1.5 9.5 1.2 14.4 1.3 14.3 1 17.9 0.8 17.9 0.6z"/>
<path fill="#ffd24d" d="M300.2 541l165.5 0 -18.5-2.1 -14.4-2.1 -9.5-2 -9.6-2.4 -4.8-1.4 -4.7-1.7 -6.4-2.6 -8-4.2 -4.8-3.1 -4.7-3.6 -4.8-4.4 -4.8-5.5 -4.8-6.8 -4.8-8.8 -2.7-6.5 -2-5.3 -4-13.8 -2.1-9.6 -1.7-9.5 -1.8-12.3 -0.7-6.8 -1.3-14.3 -1.1-14.3 -1-19.1 -0.7-16.3 -0.9-40.9 -0.5-57.3 -0.3-76.3 -0.1-124 -41.2 0 0 477 1.2 0zM720.8 345.4l27.5 0.6 28.7 0.3 0-282.3 -225.5 0 0.4 62 0.7 42.9 1.2 33.4 0.9 14.3 1.1 14.3 1.3 12.5 1.6 11.4 1.7 9.5 2.2 9.6 2.4 8.3 2 6 4.2 9.5 2.7 4.8 3.2 4.8 3.9 5 4.8 4.9 5.3 4.4 4.3 2.8 3.2 2 6.3 3.2 4.8 2 9.6 3.2 9.5 2.5 9.6 1.8 9.5 1.5 9.6 1.2 14.3 1.3 14.4 1 14.3 0.7 20.3 0.6z"/>
<path fill="#ffc74d" d="M300.2 541l155.9 0 -13.7-1.8 -9.6-1.5 -9.5-1.9 -9.6-2.4 -4.8-1.4 -4.7-1.7 -8.7-3.6 -5.7-3 -4.8-3.1 -4.7-3.5 -5.2-4.7 -4.4-5 -4.8-6.7 -4.8-8.5 -3.6-8.4 -1.1-3 -2.1-6.6 -2.7-9.7 -2-9.4 -2.4-14.3 -2.2-19 -1.2-14.4 -1-14.3 -0.8-15.7 -0.6-17.7 -0.9-42.9 -0.5-52.5 -0.2-76.3 -0.1-124 -40.7 0 0 477 1.2 0zM729.2 340.7l47.8 0.7 0-277.4 -221.5 0 0.4 62 0.8 42.9 1.4 33.4 1.7 23.9 1.6 14.3 1.3 9.5 1.7 9.6 2.2 9.5 2.8 9.5 2.1 5.8 3.8 8.6 2.7 4.7 3.1 4.8 4.7 5.8 4.8 4.7 4.8 3.9 7.4 4.7 6.9 3.4 4.8 2 9.5 3.2 9.6 2.4 9.6 1.8 9.5 1.5 12 1.3 11.9 1.1 14.4 0.9 19.1 0.9 19.1 0.6z"/>
<path fill="#ffbc4d" d="M300.2 541l148 0 -15.4-2.4 -9.5-1.8 -9.6-2.4 -9.4-2.9 -9.7-4.2 -4.8-2.5 -4.8-3 -4.7-3.5 -4.8-4.3 -4.8-5.2 -4.8-6.5 -4.8-8.3 -4.7-11 -2.9-8.8 -2.5-9.5 -2-9.6 -2.2-12.6 -2.4-20.7 -1.2-14.4 -1.2-18.1 -1.1-29.6 -0.9-42.9 -0.5-52.5 -0.2-76.3 -0.2-124 -40.1 0 0 477 1.2 0zM742.3 335.9l34.7 0.5 0-272.4 -217.4 0 0.5 62 0.9 42.9 0.7 19.1 0.7 13.1 0.8 12 1.2 13.1 1.7 14.3 1.6 9.5 1.9 9.6 2.5 9.5 2.9 8.9 2.2 5.4 3.8 7.5 3.6 5.6 4.6 6 4.7 4.8 5.8 4.7 5.2 3.5 4.8 2.6 8.4 3.7 5.9 2.1 9.6 2.7 9.6 2.1 9.5 1.6 9.6 1.3 14.3 1.4 14.4 1 14.3 0.8 37 1.1z"/>
<path fill="#ffb14d" d="M300.2 541l141.2 0 -13.3-2.3 -9.6-2.1 -9.6-2.7 -7.2-2.4 -7.1-3.1 -4.8-2.5 -6.2-4 -6-4.7 -4.9-4.8 -4-4.8 -3.4-4.8 -4.2-7.1 -4.7-10.6 -2.1-6.1 -2.7-8.9 -2.3-10.2 -2.7-14.3 -1.8-14.3 -1.4-14.3 -1.7-23.9 -1.4-38.1 -0.9-43 -0.4-52.4 -0.4-195.6 -39.6 0 0 477 1.2 0zM765.1 331.1l11.9 0.2 0-267.3 -213.1 0 0.5 62 1 42.9 1.5 31 0.9 12 1.4 14.3 1.2 9.5 1.5 9.6 2 9.5 2.5 9.5 3.2 9.6 2.6 5.9 3.6 7 4.8 7.1 4.8 5.6 4.7 4.5 4.8 3.7 7.2 4.3 7.2 3.5 4.7 1.9 9.6 3 9.6 2.3 9.5 1.8 12.7 1.9 11.2 1.1 14.4 1.2 14.3 0.8 19.1 0.7 40.7 0.9z"/>
<path fill="#ffa64d" d="M300.2 541l135.4 0 -12.3-2.4 -9.6-2.2 -9.5-3.1 -4.8-1.8 -9.6-4.5 -4.8-3 -4.7-3.4 -4.8-4.1 -4.8-5 -4.8-6.2 -4.4-7.2 -2.4-4.8 -2.7-6.2 -4.4-12.9 -1.2-4.8 -2.2-9.5 -1.8-9.4 -1.4-9.7 -1.7-14.3 -1.3-14.3 -1.4-23.8 -1.3-33.4 -0.8-43 -0.5-52.4 -0.3-195.6 -39.1 0 0 477 1.2 0zM734 325.2l43 0.8 0-262 -208.8 0 0.5 54.9 0.9 40.5 0.7 19.1 0.8 14.3 1 13.1 1 10.7 1.6 13.2 1.5 9.9 1.9 9.1 1.7 7 2.6 8.5 2.7 7.2 3.4 7.1 2.8 4.8 4.1 5.8 4.7 5.5 4.8 4.4 4.8 3.6 5.4 3.4 6.6 3.3 7.1 2.9 7.2 2.3 7.2 1.9 9.5 2 9.6 1.6 11.5 1.5 12.4 1.2 14.3 1 14.4 0.7 19.1 0.7z"/>
<path fill="#ff9b4d" d="M300.2 541l130.2 0 -11.9-2.6 -8.5-2.2 -5.8-1.9 -7.3-2.8 -7.1-3.5 -4.8-2.9 -4.7-3.3 -5.4-4.6 -4.2-4.4 -4.8-6 -4.8-7.7 -4.7-10.1 -4.8-13.9 -2.6-10.4 -2-9.6 -2.8-19 -2.2-21.5 -1.8-31 -1.1-33.4 -0.8-42.9 -0.4-52.5 -0.3-190.8 -38.6 0 0 477 1.2 0zM766.2 320.4l10.8 0.2 0-256.6 -204.3 0 0.6 56 1 39.4 0.8 19.1 0.8 14.3 1.2 14.3 1.1 9.5 1.2 9.6 1.6 9.8 2 9.3 2.8 10.4 3.1 8.6 2 4.8 4.5 8.3 4.1 6 4.1 4.8 4.9 4.8 6 4.5 4.8 3 4.7 2.5 4.8 2.2 4.8 1.8 9.6 3 8.3 2 10.8 2 9.5 1.4 12 1.4 11.9 1 28.7 1.5 41.8 1.1z"/>
<path fill="#ff8f4d" d="M300.2 541l125.6 0 -7.3-1.6 -9.6-2.6 -4.7-1.6 -9.6-3.8 -8.8-4.7 -5.5-3.8 -4.8-4 -4.8-4.8 -4.8-5.9 -3.4-5.4 -2.7-4.7 -3.4-7.2 -2.7-7.1 -2.1-6.3 -2.1-8.1 -2.7-12 -1.9-11.8 -1.3-9.5 -1.9-19.1 -1.8-28.6 -1.3-38.2 -0.8-42.9 -0.4-52.5 -0.3-190.8 -38.1 0 0 477 1.2 0zM750.7 314.4l26.3 0.5 0-250.9 -199.6 0 0.5 52.5 1 38.1 1.4 28.6 0.8 10.8 1.2 13.1 1.9 14.3 1.5 9.5 2.1 9.6 1.6 6 2.6 8.3 3.4 8.3 3 6 2.9 4.8 3.6 5 4.8 5.3 4.8 4.3 4.8 3.6 7.1 4.2 7.2 3.4 7.6 2.8 6.7 2 9.6 2.3 9.6 1.7 9.5 1.4 13.2 1.5 10.7 0.9 14.4 0.8 17.9 0.8 17.9 0.5z"/>
<path fill="#ff844d" d="M300.2 541l121.5 0 -8-2 -9.4-2.8 -4.9-1.8 -6.7-2.9 -7.7-4.3 -4.7-3.3 -4.8-3.9 -4.8-4.7 -4.8-5.8 -4.4-6.7 -5.1-10.1 -3.4-8.9 -1.6-4.8 -2.6-9.6 -2.1-9.5 -1.6-9.5 -2-14.3 -1.1-9.2 -0.8-9.9 -1.8-28.6 -1.3-38.2 -0.8-42.9 -0.4-47.7 -0.3-195.6 -37.6 0 0 477 1.2 0zM745.9 308.5l31.1 0.7 0-245.2 -194.8 0 0.6 52.5 1.1 38.1 1.6 28.6 1.2 14.4 1.1 9.5 1.3 9.5 1.6 9.6 2.1 9.5 2.6 9.1 1.8 5.2 2.9 7.3 3.6 7 3.1 4.8 3.5 4.8 4.2 4.6 4.8 4.3 4.7 3.5 4.8 3 7.2 3.7 7.2 2.8 8.3 2.6 10.8 2.7 7.6 1.4 11.5 1.7 9.6 1.1 9.5 0.9 14.4 1 31 1.3z"/>
<path fill="#ff794d" d="M300.2 541l117.7 0 -9-2.5 -7.1-2.3 -7.2-2.9 -4.8-2.3 -7.1-4.3 -6.4-4.8 -5.6-5.3 -3.6-4.2 -3.4-4.8 -3-4.8 -4.3-8.4 -2.4-5.9 -2.4-6.6 -2.2-7.7 -2.6-10.7 -1.5-8.4 -1.5-9.5 -1.8-13.5 -1.7-19.9 -1.6-28.6 -1.3-38.2 -0.6-38.1 -0.3-52.5 -0.3-190.8 -37.2 0 0 477 1.2 0zM748.3 302.5l28.7 0.7 0-239.2 -189.8 0 0.6 47.7 1.1 38.2 1.6 28.6 1.3 14.3 1.1 9.5 1.3 9.6 1.7 9.5 2.2 9.6 2 7.3 2.5 7 2.3 5.7 4.5 8.6 2.3 3.5 2.8 3.9 4.8 5.4 4.7 4.3 4.8 3.6 5 3.1 4.6 2.4 4.8 2.2 5.9 2.2 8.4 2.6 9.6 2.3 9.5 1.8 9.6 1.4 9.5 1.1 9.6 0.8 14.3 1 28.7 1.3z"/>
<path fill="#ff6e4d" d="M300.2 541l114.3 0 -5.6-1.6 -9.5-3.2 -9.6-4.3 -4.8-2.7 -4.7-3.1 -4.8-3.8 -4.8-4.6 -4.6-5.3 -3.3-4.8 -3-4.8 -3.4-6.7 -3.1-7.6 -1.8-4.7 -4-14.4 -1-4.7 -1.8-9.6 -2.7-18.2 -1.8-19.9 -1.8-28.6 -1.2-33.4 -0.8-43 -0.4-52.4 -0.3-195.6 -36.7 0 0 477 1.2 0zM759.1 296.5l17.9 0.5 0-233 -184.6 0 0.7 47.7 1.1 33.4 0.7 14.3 0.9 14.3 1.3 14.3 1.1 9.6 1.4 9.5 1.8 9.5 2.2 9.6 2.5 8.3 3.1 8.4 2.8 5.9 3.4 6 3.3 4.8 3.9 4.7 4.9 4.8 6 4.8 3.8 2.4 5.9 3.2 4.7 2.2 4.8 1.9 9.6 3 9.5 2.3 9.6 1.8 9.6 1.4 9.5 1.1 9.6 0.9 14.3 1 14.4 0.7 20.3 0.7z"/>
<path fill="#ff634d" d="M300.2 541l111.2 0 -7.2-2.2 -7-2.6 -7.4-3.4 -4.8-2.6 -5.3-3.5 -5.8-4.8 -4.8-4.7 -3.9-4.8 -4.1-5.8 -4.6-8.5 -4.9-12.1 -2.2-7 -2.6-9.9 -1.8-9.2 -1.7-9.5 -1.3-9.1 -1.1-10 -1.9-23.9 -1.7-33.4 -0.8-28.6 -0.6-42.9 -0.4-52.5 -0.2-186 -36.3 0 0 477 1.2 0zM742.3 289.4l34.7 1.1 0-226.5 -179.1 0 0.7 47.7 1.2 33.4 1.5 23.8 1.2 13.2 1.2 9.9 1.6 10.3 1.8 9.6 2.3 9.5 1.4 4.8 2.5 7.1 2.4 5.6 3.2 6.4 2.8 4.5 3.5 4.9 3.6 4.2 4.8 4.5 4.8 3.7 4.8 3.1 5.9 3.2 6.6 2.9 6.6 2.4 6 1.7 8.3 2 9.6 1.8 9.5 1.5 9.6 1.1 13.1 1.2 23.9 1.4z"/>
<path fill="#ff584d" d="M300.2 541l108.2 0 -9-3.1 -4.3-1.7 -5.3-2.5 -4.8-2.5 -6.6-4.5 -5.7-4.8 -4.6-4.7 -3.9-4.8 -3.3-4.8 -4.5-8.3 -4.8-11.4 -2.8-8.9 -2-7.4 -2.4-11.7 -1.6-9.5 -1.1-7.2 -1.3-11.9 -1.2-14.3 -1-14.3 -1.3-23.9 -0.8-33.4 -0.7-42.9 -0.3-52.5 -0.3-186 -35.8 0 0 477 1.2 0zM765 283.4l12 0.4 0-219.8 -173.5 0 0.8 42.9 1.2 33.4 1.6 23.9 1.4 14.3 1.2 9.5 1.5 9.6 1.9 9.5 1.4 5.7 2.5 8.6 2.3 6.2 3.6 8.1 2.7 4.8 3.2 5 4.7 5.7 3.7 3.8 5.5 4.6 5.2 3.5 4.8 2.7 6 2.8 6 2.3 7.1 2.3 9.6 2.4 9.6 1.9 9.5 1.4 9.6 1.2 9.5 0.9 14.4 1 31 1.4z"/>
<path fill="#ff4d4d" d="M300.2 541l105.6 0 -6.4-2.2 -6.3-2.6 -8.1-4.1 -4.7-3.1 -4.8-3.6 -4.8-4.3 -4.8-5.3 -4.8-6.6 -3.7-6.4 -2.3-4.7 -3.5-8.3 -2-6 -2.8-9.6 -0.8-3.6 -2.2-10.7 -2-11.9 -1.4-11.9 -1.4-14.3 -1.9-28.7 -0.8-19.1 -0.8-33.3 -0.5-38.2 -0.4-52.5 -0.2-186 -35.4 0 0 477 1.2 0zM763.9 276.3l13.1 0.4 0-212.7 -167.5 0 0.7 38.2 1.3 33.3 1.6 23.9 1.4 13.5 1.2 9 1.8 10.9 1.8 8.7 1.7 6.8 2.6 8.3 1.8 4.8 3.4 7.5 3.2 5.6 2.4 3.6 4 5.1 4.8 5 4.7 4 3.7 2.6 5.9 3.5 4.8 2.4 8.3 3.4 6 1.9 7.2 1.9 7.2 1.6 9.5 1.7 10.8 1.4 11.6 1.3 11.1 0.9 14.3 0.8 15.6 0.7z"/>
<path fill="#f44d4d" d="M300.2 541l103 0 -8.6-3.3 -3.4-1.5 -6.2-3.2 -4.7-3 -4.8-3.5 -5.1-4.6 -4.5-4.9 -4.8-6.5 -4.5-7.7 -2.2-4.7 -3.1-7.2 -2.3-7.1 -2.5-8.4 -0.8-3.6 -2.4-11.9 -1.9-10.7 -2.4-22.7 -2.3-29.8 -0.8-17.9 -0.8-38.1 -0.6-38.2 -0.3-52.5 -0.3-186 -34.9 0 0 477 1.2 0zM771 269.1l6 0.2 0-205.3 -161.3 0 0.9 38.2 0.7 19 0.8 14.3 1 14.4 0.9 9.5 1.1 9.5 1.3 9.6 1.7 9.5 2.2 9.6 2.5 9 1.9 5.3 2.9 6.9 2.4 4.7 2.4 4.2 4 5.6 1.9 2.4 3.6 3.9 3.6 3.3 4.8 3.7 5.4 3.4 5.4 2.8 4.7 2.2 4.8 1.8 8.9 2.8 5.5 1.3 9.5 2 9.6 1.6 9.5 1.2 9.6 1 14.3 1.1 27.5 1.3z"/>
<path fill="#e94d4d" d="M300.2 541l100.7 0 -6.3-2.5 -4.8-2.1 -4.8-2.5 -4.7-3 -4.8-3.5 -4.9-4.3 -4.7-5 -4.8-6.3 -5.3-9 -4.2-9.5 -1.2-3.1 -4.5-14.8 -2.3-10.7 -2.6-14.3 -2.5-23.9 -2.3-27.4 -0.7-19.1 -0.9-39.3 -0.5-38.2 -0.4-52.5 -0.2-186 -34.5 0 0 477 1.2 0zM760.3 260.8l16.7 0.7 0-197.5 -154.7 0 0.8 33.4 1.3 28.6 1.9 23.9 1 9.5 1.5 11.2 1.4 7.9 2 9.5 1.4 5.4 2.9 8.9 1.9 5.1 3.2 6.9 1.9 3.5 3.9 6 1.8 2.4 4.1 4.7 4.2 4 5.7 4.4 3.9 2.5 6.5 3.5 7.8 3.3 4.8 1.7 6 1.7 8.3 2.1 14.4 2.5 9.5 1.3 9.6 1 13.1 1.1 13.2 0.8z"/>
<path fill="#de4d4d" d="M300.2 541l98.4 0 -10-4.3 -3.6-2 -4.7-2.8 -5.5-4 -5.4-4.8 -4.3-4.8 -4.5-5.9 -5-8.4 -5.3-11.9 -4.7-14.9 -5-24.4 -4.5-45.4 -0.7-13.1 -0.5-16.7 -1-56 -0.5-52.5 -0.3-76.3 -0.1-128.8 -34 0 0 477 1.2 0zM761.5 252.5l15.5 0.7 0-189.2 -147.7 0 1 33.4 1.3 26.2 1.8 21.5 1.1 9.5 1.4 9.6 2.8 14.3 2.1 7.9 1.9 6.4 1.8 4.8 3.4 7.8 3 5.3 2.2 3.6 4.4 5.7 3.5 3.8 3.7 3.3 4.8 3.9 5.7 3.5 3.8 2.1 7.2 3.2 4.8 1.8 7.1 2.2 7.2 1.8 14.3 2.7 9.6 1.4 9.6 1 22.7 1.8z"/>
<path fill="#d24d4d" d="M300.2 541l96.4 0 -9.2-3.9 -8.3-5.1 -4.8-3.4 -4.8-4.3 -4.8-5.1 -4.8-6.5 -4.7-7.9 -3.6-8.2 -0.6-0.9 -1.1-2.4 -1.3-4.8 -1.8-5.6 -0.7-1.5 -0.8-2.4 -3.3-16.9 -0.8-2.2 -0.9-4.8 -3.1-30.9 -0.8-4.8 -0.7-7.2 -0.7-11.9 -0.5-16.7 -1.1-62 -0.5-52.5 -0.2-76.3 -0.1-128.8 -33.6 0 0 477 1.2 0zM769.8 244.1l7.2 0.4 0-180.5 -140.2 0 1.1 33.4 1.4 23.8 1.8 19.1 1.2 9.6 1.5 9.5 1.9 9.5 1.5 6 1.9 6.8 2.2 6.3 2 4.8 3 6.2 1.9 3.3 4.1 6.2 3.6 4.3 3.7 3.8 2.7 2.4 4.6 3.6 4.5 2.9 4.8 2.6 6.3 2.9 8 2.9 6.3 1.8 8.1 1.9 14.3 2.6 9.6 1.3 9.5 1 21.5 1.6z"/>
<path fill="#c74d4d" d="M300.2 541l94.3 0 -4.7-2.1 -2.4-0.8 -1.2-0.6 -1.6-1.3 -6.3-3.5 -1.2-1.2 -1.6-1.2 -2.4-1.5 -2-2.1 -2.8-2.2 -1.9-2.6 -2.6-2.4 -1.4-2.3 -3-3.6 -3-5.6 -1.4-1.6 -0.6-1.2 -0.7-2.4 -2.1-4.6 -1.2-1.5 -0.9-2.2 -1.5-6 -1.2-3.7 -1.2-1.9 -0.9-2.7 -1.7-10.8 -1-4.4 -0.7-1.5 -0.8-2.4 -0.9-4.7 -1.1-15.6 -1.3-11.3 -1.2-5.1 -0.8-7.4 -0.6-9.6 -0.4-14.3 -1.3-76.3 -1-95.4 -0.3-62 -0.1-95.4 -32.5 0 0 477 1.2 0zM768.6 234.5l8.4 0.6 0-171.1 -132.3 0 1.1 28.6 1.5 23.9 2 19 2.1 14.4 1.3 6.8 1.7 7.5 2.4 8.3 1.6 4.8 2.3 5.9 2.2 4.8 2.7 4.8 3 4.8 3.7 4.7 4.3 4.7 5.7 4.9 3.9 2.8 4.8 2.9 7.1 3.5 6 2.4 6 2 4.8 1.3 9.5 2.3 8.4 1.5 15.5 2.1 20.3 1.8z"/>
<path fill="#bc4d4d" d="M300.2 541l92.5 0 -2.9-1.3 -2.4-0.5 -2.4-1 -1-0.8 -0.9-1.2 -2.8-1.7 -2.4-0.9 -1.2-0.9 -0.9-1.2 -2.4-1.2 -1.5-1.1 -2.4-2.5 -1.6-1.2 -1.1-1.2 -0.9-1.3 -2.5-2.3 -1.1-1.6 -0.8-1.9 -0.4-0.6 -1.2-0.7 -0.9-1.1 -1-2.4 -1.6-2.9 -1.2-0.9 -1.2-1.8 -0.6-1.6 -0.4-2.4 -1.4-3 -1.2-1 -1.2-2 -0.7-2.3 -1.1-6 -0.6-1.8 -1.6-1.7 -0.9-2.4 -0.7-3.6 -0.4-4.8 -1.2-6.5 -1.2-1.7 -0.6-1.3 -1-4.8 -0.6-6 -0.6-13.1 -0.8-6.5 -0.8-1.8 -0.7-2.4 -0.6-3.6 -0.4-3.6 -0.6-8.3 -0.4-11.9 -0.4-43 -0.8-42.9 -0.6-9.5 -0.5-14.3 -0.7-38.2 -0.4-66.8 -0.1-124 -31.2 0 0 477 1.2 0zM763.9 223.9l13.1 1.1 0-161 -123.8 0 1.1 23.8 1.7 23.9 1 9.5 1.2 9.6 2.4 14.3 2.7 11.9 2.1 7.2 1.7 4.7 4.1 9.6 2.6 4.7 2.8 4.5 4 5.1 2 2.2 3.6 3.6 4.4 3.7 7.1 4.8 2.8 1.6 6.7 3.2 7.7 2.9 4.7 1.5 11 2.7 12.9 2.4 9.6 1.3 10.8 1.2z"/>
<path fill="#b14d4d" d="M300.2 541l90.7 0 -1.1-0.5 -3.6-0.5 -2.4-0.8 -1.1-0.8 -0.7-1 -0.4-1.2 -1.3-0.8 -2.3-0.4 -1.3-0.4 -2.4-1.9 -1-1.2 -4-2.4 -1-1 -0.7-1.4 -1.7-1.7 -1.3-0.7 -1.1-1.1 -0.6-1.3 -1-1.2 -0.8-1.7 -0.8-0.7 -2.2-2.3 -0.5-1.4 -0.5-2.2 -0.7-1.4 -1.2-0.4 -0.9-0.6 -0.9-1.2 -0.8-2.4 -0.4-3.6 -0.6-1.4 -1.2-0.5 -1.2-0.9 -1-1.9 -1.4-9.2 -2.1-1.6 -0.7-1.2 -0.5-1.1 -0.6-3.6 -0.3-7.2 -0.6-3.5 -1.2-1.2 -1.2-1.6 -0.7-2 -0.4-2.4 -0.4-4.8 -0.4-13.1 -0.5-6.8 -1.2-1.3 -0.7-1.4 -0.7-2.4 -0.5-2.4 -0.5-7.2 -0.4-11.9 -0.4-52.5 -0.3-15.6 -0.7-3.4 -0.7-4.8 -0.7-9.5 -0.6-14.4 -0.4-17.8 -0.4-71.6 -0.1-158.6 -29.9 0 0 477 1.2 0zM768.6 213.2l8.4 0.8 0-150 -114.5 0 1.3 23.8 1.6 19.1 1.7 14.3 2.5 14.3 2.5 10.8 2.5 8.3 1.6 4.8 2 4.8 2.3 4.7 2.7 4.8 3 4.6 3.9 4.9 2.2 2.4 3.4 3.4 4.7 3.8 7.5 4.8 8.2 3.9 3.5 1.5 7.2 2.4 5.8 1.7 6.2 1.5 14.3 2.6 15.5 2z"/></g><g stroke="#000" stroke-opacity=".055" stroke-width="1"><path d="M418.5 64v477"/><path d="M538.0 64v477"/><path d="M657.5 64v477"/><path d="M299 421.8h478"/><path d="M299 302.5h478"/><path d="M299 183.2h478"/></g><g fill="none" stroke-width=".85"><path stroke="#0000af" d="M418.9 64l-0.3 95.4 -0.5 57.2 -0.8 47.7 -0.6 19.1 -0.8 19.1 -0.8 14.3 -1.1 14.3 -0.5 4.8 -1.5 9.5 -1.9 9.6 -1.2 4.8 -2.7 4.7 -2 2.8 -4.8-1.8 -4.8-10.7 -2.8-14.1 -2-11.7 -1.1-12.2 -1-14.3 -0.9-14.3 -0.9-19.1 -0.8-23.8 -0.3-14.3 -0.6-66.8 -0.4-100.2"/>
<path stroke="#0000ff" d="M440.4 64l-0.2 157.4 -0.4 119.3 -0.5 38.1 -0.4 14.3 -0.6 9.6 -0.8 9.5 -1.5 9.6 -1.1 4.7 -1.5 4.8 -2.2 4.8 -3.1 4.7 -4.8 4.1 -4.8 2 -4.8 0.5 -4.8-0.8 -4.7-2.1 -4.8-3.6 -4.8-5.4 -4.8-8.1 -4.8-11.9 -2.1-8.1 -2.3-9.5 -2.4-14.3 -1.8-14.3 -0.9-8.9 -0.4-5.4 -1.4-23.9 -1.2-28.6 -0.7-28.6 -0.5-38.2 -0.4-42.9 -0.3-128.8"/>
<path stroke="#0060ff" d="M457.4 64l0 128.8 0.1 66.8 0.6 47.7 0.9 33.4 0.6 14.3 0.9 14.3 1 12.7 1.2 11.1 1.8 14.3 1.6 9.6 5.5 28.6 0.7 4.8 0.3 4.7 -0.3 4.8 -1.4 4.8 -3.2 4.7 -1.4 1.2 -4.8 3.4 -4.8 2.1 -4.7 1.6 -4.8 1.2 -4.8 0.7 -4.8 0.4 -4.8 0.2 -4.7-0.2 -4.8-0.5 -4.8-0.9 -4.8-1.4 -4.8-1.8 -4.7-2.5 -4.8-3.2 -4.8-4.2 -4.8-5.5 -4.8-7.5 -3.3-6.9 -2-4.8 -3.1-9.5 -1.4-4.8 -2-9.5 -2.5-13.4 -2.3-20 -2-23.9 -0.5-7.9 -0.7-15.9 -0.8-28.6 -0.7-38.2 -0.4-47.7 -0.4-157.4"/>
<path stroke="#00afff" d="M777 504.4l-124.3-0.1 -86-0.5 -80.1-1 -15.5-0.4 -14.4-0.7 -14.3-1.2 -9.6-1.3 -4.7-0.8 -4.8-1.1 -4.8-1.3 -4.8-1.5 -4.8-1.9 -4.7-2.4 -4.8-2.8 -4.8-3.5 -4.8-4.5 -4.8-5.6 -4.7-7.4 -1-1.7 -3.8-8 -2.3-6.3 -2.5-7.5 -2.8-11.6 -2-9.8 -2.5-18.8 -2.3-22.7 -1.1-20.3 -1-23.8 -0.7-28.6 -0.5-28.7 -0.6-81 -0.2-133.6M473.3 64l0.1 119.2 0.4 66.8 0.4 23.9 0.7 23.8 0.8 19.1 0.9 14.3 1.3 14.3 1.7 14.3 1 7.2 1.3 7.1 2.2 9.6 1.3 4.8 1.5 4.7 1.6 4.8 1.9 4.8 2.3 4.7 2.3 4.3 4.8 7.3 4.7 5.7 1.9 1.8 2.9 2.8 4.8 3.8 4.8 3.2 4.8 2.7 4.7 2.3 4.8 2 4.8 1.6 9.6 2.8 9.5 2.1 14.4 2.4 14.3 1.6 14.3 1.1 19.2 1.1 19.1 0.7 23.9 0.5 28.7 0.4 86 0.3"/>
<path stroke="#10ffef" d="M777 520.9l-129.1-0.2 -43-0.3 -33.4-0.4 -28.7-0.5 -28.7-0.9 -28.7-1.3 -14.3-1 -19.1-1.9 -14.4-1.9 -9.5-1.9 -4.8-1.2 -6.6-1.8 -7.8-2.8 -4.4-2 -5.1-2.7 -4.8-3.1 -4.7-3.7 -4.9-4.7 -4.7-5.9 -2.5-3.7 -2.9-4.8 -4.2-8.9 -2-5.4 -2.8-8.5 -3.5-15.3 -1.8-9.6 -2.4-19.1 -1.8-19 -1.2-19.1 -0.9-23.9 -0.8-28.6 -0.5-28.6 -0.5-81.1 -0.3-143.1M489.2 64l0.1 104.9 0.6 62.1 0.5 23.8 0.8 23.8 1 19.1 1.1 14.3 1.4 14.4 2.1 14.3 1.8 9.5 2.4 9.5 3 9.6 1.9 4.7 2.2 4.8 2.5 4.8 3 4.8 3.6 4.7 1.7 2.1 4.8 4.8 4.7 3.9 5.3 3.5 4.3 2.5 4.8 2.3 4.8 2 4.7 1.7 9.6 2.7 9.6 2.1 14.3 2.4 14.3 1.6 14.4 1.1 19.1 1 19.1 0.7 23.9 0.6 23.9 0.3 76.5 0.4"/>
<path stroke="#60ff9f" d="M777 530.6l-133.8-0.3 -43.1-0.2 -33.4-0.4 -28.7-0.6 -28.7-1 -23.9-1.2 -14.3-1.1 -19.1-2 -13.2-1.9 -6-1.1 -9.5-2.1 -4.8-1.2 -4.8-1.5 -9.5-3.7 -4.8-2.4 -4.8-2.7 -6.1-4.4 -3.5-2.9 -4.7-5 -5-6.4 -2.9-4.7 -2.6-4.8 -4.2-9.6 -4.5-13.8 -2.2-10 -2.7-14.3 -2.3-19.1 -1.7-19.1 -1.2-19.1 -0.9-23.8 -0.7-28.6 -0.5-28.6 -0.5-81.1 -0.2-147.9M505.7 64l0.2 90.6 0.6 57.3 0.6 23.8 0.7 19.1 1 19.1 1 14.3 1.5 14.3 2.1 14.3 1.8 9.6 2.4 9.5 1.4 4.8 1.6 4.7 1.9 4.8 2.2 4.8 3.7 6.8 1.8 2.7 3 4.1 4.8 5.3 5.5 4.9 4.1 2.9 4.7 3 7.4 3.7 7 2.7 4.8 1.6 4.7 1.4 9.6 2.2 4.8 1 9.5 1.5 14.4 1.7 14.3 1.2 14.4 0.9 19.1 0.8 23.9 0.7 23.9 0.3 66.9 0.5"/>
<path stroke="#bfff40" d="M777 537.8l-138.6-0.2 -43-0.3 -33.5-0.4 -33-0.7 -19.6-0.7 -23.9-1.3 -19.1-1.5 -14.3-1.5 -9.6-1.4 -9.6-1.6 -9.5-2 -9.6-2.6 -4.8-1.6 -4.7-1.9 -4.8-2.1 -4.8-2.5 -4.8-2.9 -4.8-3.6 -1.6-1.4 -3.1-2.9 -1.8-1.9 -3-3.3 -4.5-6.2 -5.1-9 -2.3-5.3 -2.5-6.1 -2.5-8.2 -2.5-9.6 -1.9-9.5 -1.6-9.5 -1-6.6 -0.9-7.7 -1.8-19.1 -1.2-19.1 -1-19.1 -0.8-28.6 -0.5-33.4 -0.6-85.9 -0.2-152.6M523.4 64l0.3 81.1 0.7 52.5 0.5 19 0.8 19.1 1.1 19.1 1.2 14.3 1.6 14.3 2.3 14.3 2.1 9.6 2.6 9.5 1.6 4.8 1.9 4.8 2.7 5.8 2 3.7 2.8 4.6 3.6 4.9 4.3 4.8 1.6 1.6 4.8 4.1 5.6 3.8 4 2.3 4.7 2.4 4.8 2 4.8 1.8 4.8 1.5 4.8 1.3 9.5 2.2 9.6 1.7 9.5 1.3 14.4 1.5 14.3 1.1 19.1 1 19.2 0.6 23.9 0.5 62.1 0.6"/>
<path stroke="#ffef00" d="M497.5 541l-16.9-1.1 -19.1-1.6 -18-2.1 -10.7-1.7 -9.5-2 -4.8-1.1 -4.8-1.4 -9.5-3.1 -4.8-2 -4.8-2.3 -4.8-2.7 -4.1-2.7 -5.4-4.3 -4.8-4.7 -4.8-5.7 -4.8-7.2 -3.5-6.8 -2.1-4.7 -3.9-10.8 -2.3-8.3 -2.5-10.7 -2.2-13.2 -1.9-14.3 -1-9.5 -1.5-19.1 -0.8-14.3 -0.8-19.1 -1.1-42.9 -0.5-47.7 -0.3-76.3 -0.1-133.6M542.9 64l0.4 71.5 0.9 47.7 0.6 19.1 0.9 19.1 1 14.3 1.4 14.3 1.9 14.3 1.6 9.6 2.1 9.5 2.7 9.6 1.7 4.7 1.9 4.8 2.1 4.8 2.6 4.7 2 3.2 4.6 6.4 4.9 5.2 5 4.3 4.6 3.3 2.4 1.5 7.2 3.8 4.7 2 4.8 1.8 4.8 1.6 9.6 2.5 9.5 1.9 9.6 1.5 14.3 1.7 14.4 1.2 14.3 0.9 19.1 0.8 19.1 0.5 23.9 0.5 33.5 0.3"/>
<path stroke="#ff8f00" d="M439.7 541l-11.6-2 -9.6-2.1 -4.8-1.2 -4.8-1.5 -7.9-2.7 -6.4-2.8 -4.8-2.5 -6.7-4.3 -2.8-2.1 -3.2-2.6 -4.8-4.8 -3.9-4.8 -3.4-4.8 -3.9-6.6 -4.7-10.6 -2.3-6.6 -2.5-8.2 -2.5-10.9 -2.3-12.1 -1-7 -1.1-9.5 -1.5-14.3 -1.1-14.3 -0.6-9.6 -0.8-19.1 -0.6-19 -0.8-43 -0.5-52.4 -0.2-71.6 -0.1-124M565.1 64l0.6 62 0.4 23.9 0.6 18.8 0.8 19.3 0.9 14.3 1.2 14.3 1 9.6 1.3 9.5 1.6 9.6 2 9.5 2.6 9.5 2.9 8.4 2.6 5.9 2.4 4.8 2.9 4.8 3.4 4.8 4.1 4.7 5.1 4.8 3.4 2.7 3 2.1 6.6 3.8 4.8 2.3 4.7 2 4.8 1.7 9.6 2.7 9.5 2.1 9.6 1.7 14.3 1.8 9.8 1 14.1 1 14.4 0.7 19.1 0.7 23.9 0.6 23.9 0.3"/>
<path stroke="#ff4000" d="M415.1 541l-6.2-1.7 -9.5-3.2 -9.6-4.3 -4.8-2.8 -4.7-3.1 -4.8-3.8 -4.8-4.6 -4.4-5.1 -3.4-4.8 -2.9-4.8 -3.6-7 -3-7.3 -1.8-4.8 -2.7-9.5 -2.1-8.3 -2-10.8 -1.5-9.5 -1.3-9.5 -1.7-19.1 -1-14.3 -0.8-14.3 -1.3-33.7 -0.7-42.7 -0.4-52.4 -0.3-195.6M591.5 64l0.7 47.7 0.5 19.1 0.7 19.1 0.8 14.3 1 14.3 1.4 14.3 1.2 9.5 1.6 9.6 1.9 9.5 2.4 9.6 1.5 4.7 1.7 4.8 2 4.8 2.3 4.7 3.3 5.9 2.5 3.7 2.3 3 4.7 5.2 4.8 4.3 4.8 3.5 4.8 3 4.8 2.4 4.7 2.2 4.8 1.8 9.6 2.9 4.8 1.2 9.5 2 9.6 1.5 9.5 1.3 14.4 1.3 14.3 1 14.4 0.7 19.1 0.7 19.1 0.5"/>
<path stroke="#df0000" d="M400 541l-5.4-2.2 -5.8-2.6 -3.8-2 -4.5-2.7 -5-3.7 -4.8-4.2 -1.7-1.7 -3.1-3.4 -4.8-6.2 -2.9-4.7 -2.6-4.8 -4.3-9.5 -1.6-4.8 -3.1-9.5 -1.2-4.8 -3.9-19.1 -0.8-4.7 -2.4-23.9 -2.1-23.8 -0.8-19.1 -0.9-42.9 -0.6-38.2 -0.3-52.5 -0.3-186M624.8 64l1 38.2 0.7 14.3 0.8 14.3 1.2 14.3 1 9.5 1.2 9.6 1.6 9.5 1.3 6.9 1.8 7.4 2.8 9.6 1.7 4.7 3.3 7.5 3.7 6.8 3.2 4.8 2.6 3.3 4.8 5.2 4.8 4.1 4.8 3.4 4.7 2.9 4.8 2.4 5.9 2.6 8.5 2.8 4.7 1.4 4.8 1.2 9.6 1.9 9.5 1.6 9.6 1.2 9.6 0.9 14.3 1.1 23.9 1.2"/>
<path stroke="#8f0000" d="M385 541l-4.7-4.8 -4.8 0 -19.1-19 0-4.8 -4.8-4.8 0-4.8 -4.8-4.7 0-4.8 -4.8-4.8 0-14.3 -4.8-4.8 0-23.8 -4.7-4.8 0-76.3 -4.8-4.8 0-295.7M671.8 64l0 4.8 4.8 4.7 0 43 4.8 4.7 0 14.4 4.8 4.7 0 9.6 4.8 4.7 0 4.8 4.7 4.8 0 4.7 14.4 14.3 4.8 0.1 4.7 4.7 4.8 0 4.8 4.8 9.6 0 4.7 4.8 23.9 0 4.8 4.7 4.8 0"/></g><path d="M299.500 64v477M299 540.500h87M299 64.500h5.500" stroke="#800000" stroke-width="1" fill="none"/><path d="M304.500 64.500h23M671.600 64.300H777M776.600 64V202" stroke="#800000" stroke-opacity=".4" stroke-width="1" fill="none"/><path d="M386 540.500H777" stroke="#8a3000" stroke-opacity=".32" stroke-width="1"/><path d="M418.500 536.500v4.500M538 536.500v4.500M657.500 536.500v4.500M776.500 536v5" stroke="#3a1a00" stroke-opacity=".45" stroke-width="1"/><defs><clipPath id="pc"><rect x="299" y="63.500" width="478" height="478"/></clipPath></defs><g clip-path="url(#pc)"><path d="M635.5 482.2 626.0 472.0 628.8 491.8 615.5 471.8 618.3 492.0 604.5 471.5 607.3 492.0 593.3 471.3 596.1 491.5 580.0 471.0 582.0 490.6 564.0 470.5 564.2 490.2" fill="none" stroke="#000" stroke-width="4.8" stroke-linejoin="round" stroke-linecap="round"/><path d="M565.4 488.7 565.0 488.4 564.5 488.0 563.8 487.5 563.2 486.9 562.4 486.3 561.6 485.7 560.8 485.0 560.0 484.3 559.1 483.5 558.3 482.7 557.4 481.8 556.4 480.8 555.4 479.7 554.4 478.5 553.3 477.3 552.2 476.0 551.1 474.8 550.1 473.7 549.2 472.7 548.3 471.8 547.5 471.0 546.8 470.2 546.1 469.5 545.4 468.9 544.8 468.3 544.3 467.7 543.7 467.2 543.2 466.7 542.7 466.2 542.1 465.8 541.7 465.4 541.2 465.1 540.7 464.8 540.2 464.5 539.7 464.3 539.1 464.2 538.6 464.1 538.0 464.1 537.5 464.2 537.1 464.3 536.6 464.4 536.0 464.6 535.5 464.8 534.9 465.0 534.3 465.4 533.8 465.7 533.2 466.1 532.6 466.6 532.1 467.1 531.5 467.7 531.0 468.3 530.5 469.0 530.0 469.8 529.5 470.5 529.1 471.3 528.7 472.1 528.3 472.9 527.9 473.6 527.5 474.3 527.2 474.9 526.8 475.6 526.4 476.3 526.0 477.0 525.6 477.6 525.3 478.3 525.0 478.9 524.6 479.4 524.3 479.9 524.0 480.2 523.7 480.5 523.4 480.7 523.0 480.9 522.8 481.0 522.5 481.0 522.3 481.0 522.1 481.0 521.8 481.0 521.5 481.0 521.2 481.0 520.9 480.9 520.5 480.9 520.0 480.8 519.4 480.6 518.8 480.4 518.2 480.2 517.5 479.9 516.9 479.6 516.3 479.3 515.6 479.0 515.1 478.7 514.6 478.5 514.2 478.3 513.9 478.1 513.6 477.9 513.3 477.6 512.9 477.3 512.4 476.9 511.9 476.4 511.2 475.8 510.4 475.1 509.5 474.4 508.6 473.5 507.7 472.7 506.6 471.7 505.5 470.7 504.2 469.5 502.7 468.3 501.1 467.0 499.3 465.5 497.3 463.9 494.9 462.2 492.4 460.4 489.6 458.4 486.6 456.3 483.4 454.2 480.2 452.0 476.9 449.7 473.7 447.4 470.4 445.2 467.3 442.9 464.1 440.6 460.8 438.2 457.5 435.8 454.1 433.3 450.7 430.8 447.4 428.3 444.1 425.8 440.9 423.3 437.9 420.9 435.0 418.6 432.3 416.3 429.7 414.1 427.3 411.9 425.0 409.7 422.7 407.5 420.4 405.3 418.2 403.1 415.9 400.9 413.6 398.7 411.2 396.3 408.7 393.9 406.1 391.4 403.5 388.8 400.8 386.2 398.1 383.6 395.5 381.1 393.0 378.6 390.5 376.2 388.3 374.0 386.2 372.0 384.4 370.1 382.7 368.4 381.1 366.9 379.6 365.4 378.3 364.1 377.0 362.8 375.8 361.5 374.6 360.3 373.5 359.0 372.3 357.8 371.1 356.5 369.9 355.2 368.7 353.9 367.5 352.6 366.4 351.4 365.4 350.2 364.4 349.2 363.6 348.2 362.8 347.4 362.3 346.7 360.1 348.5 360.7 349.2 361.4 350.0 362.2 351.0 363.1 352.2 364.0 353.4 365.1 354.7 366.2 356.1 367.3 357.5 368.5 358.9 369.7 360.2 370.9 361.5 372.1 362.7 373.3 364.0 374.5 365.2 375.8 366.5 377.2 367.9 378.6 369.3 380.2 370.9 381.9 372.6 383.8 374.4 385.8 376.5 388.1 378.7 390.5 381.1 393.0 383.6 395.7 386.1 398.3 388.8 401.0 391.4 403.7 393.9 406.3 396.5 408.8 398.9 411.2 401.2 413.5 403.4 415.7 405.7 418.0 407.9 420.2 410.1 422.5 412.3 424.8 414.5 427.3 416.8 429.9 419.1 432.6 421.4 435.5 423.9 438.6 426.3 441.8 428.8 445.0 431.4 448.4 433.9 451.8 436.4 455.1 438.9 458.5 441.4 461.8 443.8 464.9 446.1 468.1 448.4 471.4 450.7 474.7 453.0 477.9 455.3 481.2 457.5 484.3 459.6 487.3 461.7 490.1 463.6 492.6 465.4 494.9 467.1 497.0 468.6 498.7 469.9 500.3 471.2 501.7 472.4 503.0 473.5 504.1 474.5 505.2 475.4 506.2 476.3 507.1 477.1 508.0 477.9 508.8 478.6 509.4 479.1 510.0 479.6 510.4 480.0 510.7 480.4 511.1 480.8 511.5 481.1 511.9 481.5 512.4 481.9 512.9 482.3 513.5 482.7 514.2 483.1 514.9 483.5 515.6 483.9 516.3 484.3 517.1 484.6 517.9 485.0 518.6 485.3 519.4 485.5 520.1 485.7 520.9 485.7 521.5 485.8 522.2 485.7 522.9 485.6 523.5 485.4 524.2 485.1 524.7 484.8 525.3 484.4 525.8 484.0 526.3 483.5 526.9 483.0 527.4 482.4 527.9 481.7 528.3 481.1 528.8 480.4 529.2 479.7 529.6 479.1 530.0 478.4 530.4 477.7 530.8 477.1 531.3 476.4 531.7 475.6 532.1 474.8 532.5 474.0 532.9 473.2 533.2 472.5 533.5 471.8 533.9 471.2 534.2 470.7 534.5 470.3 534.8 470.0 535.1 469.8 535.5 469.5 535.8 469.4 536.2 469.3 536.6 469.2 536.9 469.1 537.3 469.0 537.6 469.0 537.9 468.9 538.2 468.9 538.4 468.9 538.5 468.9 538.6 468.8 538.6 468.8 538.7 468.8 538.9 468.8 539.1 468.9 539.4 469.0 539.9 469.2 540.3 469.4 540.8 469.7 541.3 470.1 541.8 470.5 542.4 471.0 542.9 471.5 543.6 472.1 544.2 472.7 545.0 473.5 545.7 474.2 546.5 475.1 547.5 476.1 548.4 477.3 549.5 478.4 550.6 479.7 551.7 480.9 552.7 482.1 553.8 483.2 554.8 484.3 555.7 485.3 556.6 486.2 557.5 487.0 558.4 487.8 559.2 488.5 560.0 489.2 560.8 489.9 561.5 490.4 562.1 490.9 562.6 491.3 563.0 491.7zM360.3 348.8 361.0 349.3 361.7 349.9 362.7 350.6 363.7 351.4 364.8 352.3 366.0 353.2 367.2 354.2 368.4 355.2 369.7 356.2 370.8 357.1 372.0 358.0 373.1 358.9 374.2 359.7 375.3 360.5 376.4 361.4 377.7 362.3 379.0 363.3 380.4 364.3 382.0 365.5 383.8 366.9 385.8 368.4 388.0 370.0 390.3 371.7 392.8 373.6 395.4 375.5 398.0 377.4 400.7 379.4 403.4 381.4 406.2 383.4 408.8 385.4 411.6 387.4 414.5 389.5 417.5 391.7 420.6 394.0 423.7 396.2 426.7 398.3 429.5 400.4 432.2 402.3 434.7 404.1 436.8 405.6 438.7 406.9 440.1 408.0 441.4 408.9 442.5 409.7 443.4 410.3 444.3 411.0 445.2 411.6 446.2 412.2 447.3 412.9 448.6 413.8 450.0 414.7 451.5 415.6 453.1 416.6 454.7 417.5 456.3 418.5 458.0 419.5 459.7 420.5 461.5 421.5 463.3 422.4 465.1 423.3 467.0 424.2 469.0 425.0 471.1 425.7 473.1 426.4 475.2 427.0 477.2 427.6 479.1 428.2 480.9 428.9 482.5 429.5 483.9 430.1 485.2 430.8 486.4 431.4 487.5 432.1 488.4 432.7 489.2 433.4 490.0 434.1 490.6 434.8 491.2 435.6 491.8 436.6 492.3 437.6 492.8 438.7 493.2 439.9 493.6 441.3 493.9 442.7 494.2 444.2 494.5 445.7 494.7 447.2 494.9 448.8 495.0 450.4 495.2 452.0 495.2 453.5 495.3 455.2 495.3 456.8 495.2 458.6 495.1 460.3 494.9 462.0 494.8 463.6 494.6 465.2 494.4 466.8 494.1 468.2 493.9 469.5 493.6 470.7 493.3 472.0 493.0 473.2 492.6 474.3 492.2 475.3 491.9 476.3 491.5 477.2 491.1 478.0 490.7 478.6 490.3 479.1 490.0 479.5 489.6 479.8 489.2 480.0 488.9 480.1 488.6 480.1 488.2 480.1 487.8 480.1 487.3 480.1 486.9 480.1 486.4 480.1 486.0 480.0 485.5 479.9 485.0 479.8 484.4 479.5 483.8 479.2 483.0 478.8 482.2 478.4 481.3 477.8 480.3 477.2 479.3 476.5 478.2 475.8 477.0 475.0 475.8 474.1 474.5 473.1 473.1 472.1 471.7 471.0 470.3 469.9 468.8 468.7 467.2 467.4 465.6 466.0 463.8 464.5 462.0 462.9 460.2 461.3 458.3 459.5 456.3 457.8 454.4 456.0 452.4 454.2 450.5 452.4 448.6 450.7 446.8 449.0 444.9 447.2 443.0 445.5 441.1 443.7 439.3 442.0 437.4 440.2 435.5 438.4 433.7 436.5 431.8 434.7 430.0 432.8 428.1 430.9 426.4 429.0 424.6 427.1 422.8 425.2 421.1 423.3 419.3 421.3 417.4 419.2 415.5 417.0 413.5 414.7 411.4 412.3 409.1 409.6 406.6 406.8 404.0 403.7 401.3 400.5 398.6 397.3 395.9 394.1 393.3 391.0 390.8 388.0 388.5 385.3 386.5 382.8 384.7 380.6 383.0 378.6 381.5 376.7 380.1 375.0 378.9 373.4 377.7 371.9 376.6 370.4 375.6 369.0 374.6 367.7 373.6 366.3 372.7 365.0 371.9 363.9 371.2 362.8 370.6 361.7 370.0 360.7 369.4 359.8 368.9 358.8 368.4 357.9 367.8 357.0 367.3 356.1 366.7 355.1 366.2 354.1 365.6 353.0 365.1 352.0 364.6 350.9 364.1 349.9 363.7 349.0 363.3 348.2 363.0 347.5 362.7 346.9 359.7 348.3 359.9 348.8 360.2 349.5 360.5 350.4 360.9 351.3 361.3 352.4 361.8 353.5 362.2 354.6 362.7 355.7 363.2 356.9 363.7 357.9 364.2 359.0 364.7 359.9 365.3 360.9 365.8 361.9 366.4 362.9 367.1 363.9 367.8 365.0 368.6 366.1 369.4 367.4 370.4 368.7 371.4 370.0 372.4 371.4 373.5 372.8 374.6 374.2 375.8 375.8 377.1 377.4 378.5 379.1 380.1 381.0 381.7 383.0 383.5 385.2 385.6 387.7 387.9 390.4 390.4 393.4 393.0 396.5 395.7 399.7 398.5 402.9 401.2 406.1 403.8 409.2 406.3 412.1 408.6 414.7 410.7 417.1 412.8 419.4 414.7 421.6 416.6 423.7 418.4 425.7 420.2 427.6 422.0 429.5 423.8 431.4 425.6 433.3 427.4 435.2 429.3 437.1 431.2 439.0 433.1 440.9 435.0 442.7 436.8 444.5 438.7 446.3 440.6 448.1 442.4 449.8 444.3 451.6 446.2 453.3 448.1 455.1 450.0 456.9 451.9 458.7 453.9 460.5 455.8 462.2 457.7 464.0 459.6 465.7 461.4 467.3 463.1 468.8 464.8 470.2 466.4 471.6 467.9 472.8 469.3 474.0 470.8 475.2 472.1 476.2 473.4 477.2 474.7 478.2 475.9 479.0 477.0 479.9 478.1 480.6 479.1 481.3 480.0 481.9 480.8 482.5 481.6 483.0 482.4 483.5 483.2 483.9 484.0 484.3 484.8 484.5 485.7 484.8 486.5 484.9 487.4 484.9 488.2 484.9 489.0 484.7 489.8 484.4 490.6 484.1 491.4 483.6 492.1 483.1 492.8 482.5 493.5 481.8 494.1 481.0 494.7 480.1 495.2 479.2 495.8 478.2 496.4 477.1 496.9 475.9 497.3 474.6 497.8 473.3 498.2 471.9 498.5 470.5 498.9 469.0 499.1 467.5 499.4 465.9 499.6 464.2 499.8 462.4 500.0 460.6 500.1 458.8 500.1 457.0 500.2 455.1 500.1 453.4 500.0 451.6 499.9 450.0 499.7 448.3 499.5 446.6 499.2 444.9 498.9 443.2 498.5 441.6 498.0 440.0 497.5 438.4 496.8 437.0 496.1 435.6 495.3 434.4 494.5 433.3 493.7 432.2 492.8 431.3 491.8 430.4 490.8 429.6 489.7 428.7 488.5 427.9 487.3 427.1 485.9 426.3 484.3 425.4 482.5 424.7 480.6 423.9 478.6 423.3 476.6 422.6 474.5 422.0 472.5 421.3 470.5 420.7 468.7 420.0 466.9 419.3 465.2 418.5 463.5 417.6 461.8 416.8 460.1 415.8 458.5 414.9 456.9 413.9 455.3 413.0 453.7 412.0 452.2 411.1 450.8 410.2 449.5 409.5 448.4 408.8 447.5 408.2 446.6 407.6 445.7 407.0 444.8 406.4 443.7 405.6 442.5 404.7 441.0 403.7 439.2 402.4 437.0 400.8 434.6 399.1 431.9 397.2 429.0 395.1 426.0 392.9 422.9 390.7 419.9 388.5 416.8 386.3 413.9 384.2 411.2 382.2 408.5 380.2 405.8 378.3 403.1 376.3 400.4 374.3 397.7 372.3 395.2 370.4 392.7 368.6 390.4 366.8 388.2 365.2 386.2 363.7 384.4 362.4 382.8 361.2 381.3 360.1 380.0 359.1 378.8 358.2 377.6 357.4 376.5 356.5 375.4 355.7 374.3 354.9 373.2 354.1 371.9 353.2 370.6 352.3 369.3 351.4 368.0 350.5 366.8 349.7 365.6 348.9 364.5 348.1 363.5 347.5 362.7 346.9 362.1 346.4zM360.4 348.9 360.9 349.3 361.6 349.7 362.3 350.1 363.2 350.7 364.1 351.3 365.1 351.9 366.1 352.6 367.1 353.3 368.0 353.9 369.0 354.6 369.8 355.2 370.7 355.8 371.5 356.5 372.4 357.1 373.3 357.8 374.2 358.4 375.2 359.2 376.3 360.0 377.6 360.8 378.9 361.7 380.3 362.6 381.8 363.6 383.3 364.7 384.9 365.8 386.6 366.9 388.4 368.1 390.3 369.3 392.3 370.6 394.5 371.8 396.7 373.1 399.0 374.4 401.6 375.7 404.3 377.1 407.1 378.5 409.9 380.0 412.8 381.4 415.8 382.8 418.6 384.1 421.4 385.4 424.1 386.6 426.8 387.8 429.5 389.0 432.2 390.1 434.9 391.2 437.6 392.3 440.2 393.3 442.6 394.2 444.9 395.1 447.1 395.8 448.9 396.5 450.6 397.1 452.0 397.6 453.3 398.0 454.4 398.3 455.4 398.6 456.4 398.8 457.3 399.0 458.3 399.0 459.2 399.0 460.2 399.0 461.2 398.9 462.2 398.6 463.1 398.3 464.0 397.9 464.8 397.4 465.6 396.9 466.3 396.3 467.0 395.7 467.6 395.1 468.2 394.4 468.7 393.7 469.2 393.0 469.7 392.2 470.1 391.4 470.5 390.5 470.8 389.6 471.1 388.6 471.3 387.6 471.4 386.6 471.4 385.5 471.4 384.5 471.4 383.4 471.3 382.4 471.2 381.2 471.0 380.1 470.8 378.8 470.5 377.5 470.0 376.1 469.5 374.7 468.9 373.1 468.1 371.4 467.1 369.7 466.1 368.0 464.9 366.1 463.7 364.2 462.4 362.3 461.0 360.2 459.6 358.2 458.2 356.0 456.7 353.9 455.1 351.6 453.5 349.4 451.9 347.1 450.2 344.7 448.4 342.2 446.6 339.7 444.7 337.1 442.7 334.5 440.5 331.7 438.3 328.8 436.0 325.8 433.5 322.6 430.9 319.3 428.1 315.9 425.3 312.5 422.5 309.0 419.7 305.5 416.9 302.0 414.2 298.6 411.5 295.3 408.8 292.0 406.1 288.5 403.2 284.9 400.4 281.4 397.6 277.9 394.9 274.5 392.4 271.3 390.0 268.3 387.9 265.7 386.0 263.3 384.4 261.4 383.1 259.8 382.0 258.5 381.1 257.5 380.3 256.6 379.7 255.8 379.1 255.1 378.5 254.3 377.9 253.4 377.1 252.3 376.3 251.1 375.4 249.9 374.6 248.6 373.8 247.4 373.0 246.1 372.2 244.8 371.4 243.4 370.6 242.1 369.9 240.8 369.2 239.5 368.5 238.1 367.7 236.7 366.9 235.1 366.1 233.6 365.4 232.0 364.6 230.5 364.0 229.2 363.4 227.9 362.9 226.8 362.5 226.0 359.5 227.4 359.8 228.2 360.3 229.3 360.8 230.5 361.3 232.0 361.9 233.5 362.5 235.2 363.2 236.8 363.9 238.5 364.7 240.1 365.4 241.5 366.2 242.9 367.0 244.2 367.8 245.6 368.6 246.9 369.5 248.3 370.3 249.6 371.2 250.9 372.1 252.2 373.0 253.4 373.9 254.7 374.7 255.8 375.5 256.7 376.1 257.5 376.8 258.3 377.5 259.0 378.2 259.9 379.1 260.9 380.2 262.2 381.5 263.8 383.0 265.7 384.9 268.0 387.0 270.7 389.4 273.7 392.0 276.9 394.6 280.3 397.4 283.8 400.2 287.3 403.1 290.9 405.8 294.3 408.5 297.7 411.2 301.0 413.9 304.4 416.7 307.9 419.6 311.4 422.4 314.9 425.1 318.3 427.9 321.7 430.5 325.0 432.9 328.2 435.3 331.2 437.4 334.1 439.5 336.8 441.5 339.5 443.4 342.1 445.2 344.6 447.0 347.0 448.6 349.4 450.3 351.7 451.8 353.9 453.3 356.1 454.8 358.3 456.3 360.4 457.6 362.5 459.0 364.5 460.2 366.5 461.4 368.3 462.4 370.1 463.4 371.8 464.3 373.4 465.1 374.9 465.9 376.3 466.5 377.5 467.0 378.7 467.5 379.8 467.8 380.8 468.1 381.8 468.3 382.8 468.4 383.7 468.5 384.6 468.6 385.5 468.5 386.3 468.4 387.1 468.2 387.9 468.0 388.6 467.7 389.3 467.4 390.0 467.1 390.6 466.7 391.2 466.2 391.7 465.8 392.2 465.3 392.6 464.8 393.0 464.2 393.3 463.7 393.5 463.1 393.7 462.4 393.9 461.8 394.0 461.2 394.1 460.5 394.2 459.8 394.2 459.1 394.2 458.5 394.2 457.9 394.2 457.2 394.1 456.5 393.9 455.6 393.7 454.6 393.5 453.5 393.1 452.1 392.6 450.5 392.1 448.6 391.5 446.5 390.7 444.2 389.9 441.8 389.0 439.2 388.0 436.6 387.0 433.9 385.9 431.2 384.8 428.5 383.7 425.9 382.6 423.3 381.4 420.5 380.1 417.6 378.8 414.8 377.4 411.9 376.0 409.0 374.6 406.3 373.2 403.6 371.9 401.1 370.6 398.7 369.3 396.6 368.1 394.5 366.9 392.5 365.8 390.7 364.6 388.9 363.5 387.2 362.4 385.6 361.3 384.0 360.2 382.5 359.3 381.1 358.3 379.8 357.5 378.6 356.7 377.6 355.9 376.6 355.2 375.6 354.5 374.7 353.9 373.8 353.2 372.9 352.6 372.0 352.0 371.0 351.4 370.0 350.8 369.0 350.2 367.9 349.6 366.9 349.0 365.8 348.4 364.9 347.9 364.0 347.4 363.2 346.9 362.5 346.6 362.0 346.3zM360.4 228.3 360.9 228.5 361.6 228.8 362.4 229.1 363.3 229.4 364.2 229.8 365.2 230.3 366.2 230.7 367.2 231.2 368.2 231.7 369.1 232.2 369.9 232.7 370.7 233.1 371.5 233.6 372.3 234.2 373.2 234.7 374.1 235.3 375.1 236.0 376.2 236.8 377.5 237.6 378.9 238.5 380.5 239.6 382.3 240.7 384.2 242.0 386.3 243.3 388.4 244.7 390.5 246.1 392.7 247.5 394.8 248.9 396.9 250.3 398.9 251.5 400.8 252.8 402.7 254.0 404.6 255.2 406.5 256.4 408.4 257.6 410.2 258.8 412.0 259.9 413.7 261.0 415.4 262.0 416.9 263.0 418.3 263.9 419.6 264.7 420.9 265.4 422.0 266.1 423.1 266.8 424.2 267.5 425.3 268.1 426.5 268.8 427.7 269.4 429.0 270.1 430.4 270.9 431.9 271.6 433.5 272.3 435.1 273.1 436.6 273.8 438.2 274.5 439.8 275.2 441.3 275.9 442.8 276.5 444.1 277.1 445.4 277.6 446.7 278.2 447.9 278.7 449.1 279.2 450.2 279.6 451.3 280.1 452.4 280.5 453.5 280.8 454.5 281.1 455.6 281.3 456.5 281.4 457.5 281.5 458.3 281.4 459.2 281.4 460.0 281.2 460.8 281.0 461.5 280.7 462.2 280.3 462.8 279.9 463.4 279.5 464.0 279.0 464.5 278.4 464.9 277.8 465.3 277.1 465.7 276.4 466.0 275.7 466.3 275.0 466.5 274.2 466.6 273.4 466.7 272.6 466.8 271.7 466.7 270.8 466.6 269.8 466.5 268.9 466.4 267.9 466.2 266.9 466.0 265.9 465.7 265.0 465.5 264.1 465.3 263.4 465.1 262.7 464.9 262.2 464.7 261.7 464.4 261.3 464.2 260.9 463.9 260.4 463.5 259.9 463.0 259.2 462.4 258.3 461.6 257.2 460.6 255.7 459.4 254.0 458.1 252.1 456.6 250.0 455.0 247.8 453.4 245.5 451.7 243.2 450.0 240.8 448.2 238.5 446.5 236.3 444.9 234.2 443.2 232.1 441.6 230.1 439.9 228.1 438.2 226.1 436.5 224.0 434.6 221.7 432.7 219.3 430.7 216.7 428.6 213.8 426.2 210.6 423.6 207.0 420.8 203.1 417.9 199.1 414.9 194.9 412.0 190.8 409.1 186.7 406.4 182.9 403.8 179.4 401.6 176.3 399.6 173.6 397.8 171.2 396.2 169.0 394.7 167.0 393.3 165.1 392.0 163.4 390.8 161.7 389.5 160.1 388.3 158.5 387.0 156.8 385.8 155.2 384.5 153.6 383.4 152.1 382.2 150.7 381.1 149.3 380.0 148.0 379.0 146.7 378.0 145.4 377.0 144.1 376.1 142.8 375.2 141.6 374.3 140.3 373.5 139.0 372.7 137.8 371.9 136.6 371.1 135.4 370.4 134.3 369.6 133.1 368.9 132.0 368.2 130.9 367.4 129.9 366.7 128.8 365.9 127.6 365.2 126.5 364.4 125.5 363.8 124.5 363.2 123.5 362.6 122.7 362.2 122.0 361.8 121.4 359.2 123.0 359.5 123.6 359.9 124.3 360.4 125.2 361.0 126.2 361.6 127.2 362.2 128.4 362.8 129.5 363.5 130.7 364.2 131.9 364.8 133.1 365.5 134.2 366.2 135.3 366.9 136.5 367.7 137.7 368.5 138.9 369.3 140.1 370.1 141.3 371.0 142.6 371.9 143.9 372.9 145.2 373.9 146.5 374.9 147.8 376.0 149.1 377.0 150.4 378.1 151.7 379.2 153.1 380.3 154.5 381.5 156.0 382.7 157.6 384.0 159.2 385.2 160.8 386.4 162.4 387.6 164.1 388.9 165.7 390.2 167.5 391.6 169.3 393.0 171.3 394.7 173.5 396.4 176.0 398.4 178.7 400.6 181.7 403.1 185.2 405.8 189.1 408.7 193.1 411.7 197.2 414.6 201.4 417.6 205.4 420.4 209.3 423.0 212.9 425.4 216.2 427.6 219.0 429.7 221.7 431.7 224.1 433.5 226.4 435.3 228.5 437.0 230.6 438.6 232.6 440.2 234.6 441.8 236.6 443.5 238.7 445.1 240.9 446.8 243.2 448.5 245.5 450.2 247.8 451.8 250.1 453.3 252.3 454.8 254.4 456.1 256.3 457.3 258.0 458.4 259.4 459.2 260.6 459.9 261.5 460.4 262.2 460.7 262.6 461.0 263.0 461.1 263.2 461.2 263.4 461.3 263.6 461.5 264.1 461.7 264.6 462.0 265.4 462.3 266.1 462.7 266.9 463.0 267.8 463.2 268.6 463.5 269.5 463.7 270.3 463.8 271.1 463.9 271.8 463.9 272.4 463.8 273.0 463.7 273.6 463.6 274.2 463.4 274.7 463.2 275.2 462.9 275.7 462.6 276.1 462.3 276.4 461.9 276.7 461.6 276.9 461.2 277.1 460.8 277.2 460.4 277.2 460.0 277.2 459.5 277.2 459.0 277.2 458.5 277.1 457.8 277.0 457.2 276.9 456.4 276.7 455.7 276.5 454.8 276.3 453.9 276.0 452.9 275.7 451.9 275.3 450.8 274.9 449.6 274.5 448.4 274.0 447.2 273.4 445.9 272.9 444.5 272.4 443.1 271.8 441.6 271.1 440.0 270.4 438.5 269.8 436.9 269.0 435.3 268.3 433.8 267.6 432.4 266.9 431.0 266.3 429.7 265.6 428.5 265.0 427.4 264.4 426.3 263.8 425.3 263.2 424.2 262.5 423.0 261.8 421.8 261.1 420.5 260.3 419.1 259.4 417.5 258.5 415.9 257.5 414.2 256.4 412.4 255.3 410.6 254.1 408.7 252.9 406.8 251.7 404.9 250.5 403.0 249.3 401.1 248.1 399.2 246.8 397.1 245.5 395.0 244.1 392.8 242.7 390.6 241.3 388.5 239.9 386.4 238.5 384.5 237.3 382.7 236.1 381.1 235.1 379.7 234.2 378.5 233.4 377.4 232.6 376.4 231.9 375.4 231.3 374.6 230.7 373.7 230.2 372.8 229.7 371.9 229.2 370.9 228.6 369.9 228.1 368.8 227.7 367.7 227.2 366.6 226.8 365.5 226.5 364.5 226.1 363.6 225.8 362.8 225.5 362.1 225.3 361.6 225.1zM360.1 123.9 360.7 124.1 361.4 124.2 362.2 124.4 363.0 124.6 363.9 124.8 364.9 125.0 365.9 125.3 367.0 125.7 368.0 126.1 369.1 126.6 370.3 127.3 371.6 128.0 373.0 128.9 374.5 129.8 376.0 130.7 377.6 131.7 379.2 132.7 380.8 133.7 382.4 134.7 383.9 135.6 385.4 136.5 386.9 137.4 388.4 138.2 389.9 139.1 391.5 140.0 392.9 140.8 394.4 141.7 395.9 142.5 397.4 143.4 398.9 144.2 400.4 145.1 401.9 146.0 403.4 146.9 404.9 147.7 406.4 148.6 407.9 149.5 409.4 150.4 410.9 151.3 412.4 152.2 413.9 153.1 415.4 154.0 416.9 154.9 418.4 155.8 419.9 156.7 421.4 157.7 422.9 158.6 424.4 159.5 425.9 160.4 427.4 161.3 429.0 162.2 430.5 163.0 432.1 163.9 433.6 164.7 435.2 165.5 436.8 166.3 438.3 167.1 439.8 167.8 441.3 168.6 442.7 169.3 444.0 169.9 445.3 170.6 446.5 171.2 447.7 171.9 448.9 172.6 450.0 173.2 451.2 173.8 452.2 174.4 453.3 174.9 454.4 175.3 455.4 175.6 456.3 175.8 457.2 176.0 458.1 176.0 459.0 175.9 459.7 175.8 460.5 175.5 461.1 175.2 461.7 174.8 462.3 174.4 462.8 174.0 463.3 173.4 463.7 172.8 464.1 172.2 464.5 171.5 464.7 170.8 465.0 170.1 465.2 169.3 465.3 168.5 465.4 167.8 465.4 167.0 465.4 166.2 465.3 165.4 465.2 164.6 465.0 163.9 464.8 163.1 464.6 162.3 464.3 161.5 464.1 160.8 463.9 160.0 463.6 159.3 463.4 158.7 463.2 158.2 463.1 157.7 462.9 157.2 462.6 156.7 462.4 156.2 462.0 155.5 461.6 154.7 461.0 153.7 460.3 152.4 459.3 150.9 458.3 149.2 457.0 147.2 455.7 145.1 454.3 142.9 452.8 140.6 451.3 138.2 449.8 135.9 448.2 133.6 446.7 131.4 445.1 129.2 443.6 127.1 442.1 125.0 440.5 122.9 439.0 120.7 437.3 118.5 435.6 116.3 433.9 113.9 432.0 111.4 430.1 108.8 428.0 106.0 425.6 102.8 423.1 99.5 420.6 96.1 418.0 92.6 415.4 89.1 412.9 85.8 410.6 82.7 408.4 79.8 406.6 77.3 404.9 75.1 403.4 73.2 402.1 71.4 400.9 69.8 399.8 68.4 398.8 67.1 397.9 65.9 397.1 64.8 396.3 63.8 395.6 62.8 395.0 62.0 394.5 61.2 394.1 60.6 393.8 60.1 393.6 59.8 393.4 59.4 393.2 59.2 393.1 58.9 392.9 58.6 392.8 58.4 389.2 60.6 389.4 60.8 389.5 61.0 389.6 61.3 389.8 61.6 390.1 61.9 390.4 62.4 390.7 62.9 391.2 63.5 391.7 64.3 392.4 65.2 393.1 66.2 393.9 67.2 394.8 68.3 395.7 69.5 396.7 70.7 397.8 72.2 399.0 73.8 400.3 75.5 401.8 77.5 403.4 79.7 405.3 82.2 407.4 85.0 409.8 88.2 412.3 91.5 414.8 94.9 417.4 98.4 420.0 101.8 422.5 105.2 424.8 108.3 426.9 111.2 428.9 113.8 430.7 116.3 432.5 118.6 434.2 120.9 435.8 123.1 437.4 125.2 438.9 127.3 440.4 129.4 441.9 131.5 443.3 133.6 444.8 135.9 446.4 138.2 447.9 140.5 449.4 142.8 450.8 145.1 452.2 147.3 453.5 149.4 454.7 151.3 455.8 153.1 456.7 154.6 457.5 155.8 458.2 156.8 458.7 157.5 459.0 158.1 459.3 158.5 459.5 158.9 459.7 159.2 459.9 159.6 460.1 160.1 460.4 160.7 460.7 161.3 461.0 162.0 461.3 162.7 461.6 163.3 461.9 164.0 462.1 164.7 462.3 165.3 462.5 165.9 462.5 166.5 462.6 167.0 462.5 167.5 462.5 168.1 462.3 168.7 462.2 169.3 462.0 169.8 461.8 170.3 461.6 170.8 461.3 171.1 461.1 171.4 460.8 171.6 460.5 171.8 460.2 171.9 459.8 171.9 459.5 172.0 459.2 171.9 458.8 171.9 458.4 171.8 457.9 171.7 457.3 171.6 456.6 171.4 455.9 171.1 455.1 170.8 454.2 170.4 453.2 169.9 452.1 169.3 451.0 168.7 449.8 168.1 448.6 167.4 447.3 166.7 446.0 166.1 444.6 165.4 443.2 164.7 441.8 163.9 440.3 163.2 438.7 162.4 437.2 161.6 435.6 160.8 434.1 160.0 432.5 159.2 431.0 158.4 429.6 157.6 428.1 156.8 426.6 155.9 425.1 155.0 423.6 154.1 422.1 153.2 420.6 152.2 419.1 151.3 417.6 150.4 416.1 149.5 414.6 148.6 413.1 147.7 411.6 146.8 410.1 145.9 408.6 145.0 407.1 144.1 405.6 143.2 404.1 142.3 402.6 141.5 401.1 140.6 399.6 139.7 398.1 138.8 396.6 138.0 395.1 137.1 393.5 136.3 392.1 135.4 390.6 134.6 389.1 133.7 387.6 132.9 386.1 132.0 384.6 131.1 383.0 130.1 381.4 129.2 379.9 128.2 378.3 127.1 376.7 126.2 375.2 125.2 373.7 124.4 372.2 123.6 370.9 123.0 369.5 122.4 368.2 122.0 367.0 121.6 365.8 121.3 364.7 121.1 363.7 120.9 362.8 120.8 362.0 120.7 361.4 120.6 360.9 120.5z" fill="#000" fill-rule="nonzero"/><circle cx="362.0" cy="348.2" r="2.1"/><circle cx="361.8" cy="227.3" r="2.1"/><circle cx="361.3" cy="122.8" r="2.1"/><circle cx="564.2" cy="490.2" r="1.9"/><circle cx="361.2" cy="347.6" r="1.4"/><circle cx="361.2" cy="347.6" r="1.5"/><circle cx="361.2" cy="347.6" r="1.7"/><circle cx="361.2" cy="347.6" r="1.6"/><circle cx="361.0" cy="226.7" r="1.7"/><circle cx="361.0" cy="226.7" r="1.7"/><circle cx="360.5" cy="122.2" r="1.6"/><circle cx="360.5" cy="122.2" r="1.8"/><circle cx="391.0" cy="59.5" r="2.1"/></g><path d="M450 63.200c3-1 8.500-.5 13.500 1.500l-2 3.200c-4 .8-8.500.3-11-1.200z" fill="#000"/><g font-family="Liberation Sans,sans-serif" font-size="11" fill="#262626"><text x="299.0" y="558" text-anchor="middle">0.5</text><text x="293.500" y="545.9" text-anchor="end">0.5</text><text x="418.5" y="558" text-anchor="middle">1</text><text x="293.500" y="426.6" text-anchor="end">1</text><text x="538.0" y="558" text-anchor="middle">1.5</text><text x="293.500" y="307.4" text-anchor="end">1.5</text><text x="657.5" y="558" text-anchor="middle">2</text><text x="293.500" y="188.2" text-anchor="end">2</text><text x="777.0" y="558" text-anchor="middle">2.5</text><text x="293.500" y="68.9" text-anchor="end">2.5</text></g><g font-family="Liberation Serif,serif" font-size="14" fill="#3a3a3a" letter-spacing=".08"><text x="538.200" y="573.800" text-anchor="middle">A-B bond distance (Å)</text><text transform="translate(270 302.200) rotate(-90)" text-anchor="middle">B-C bond distance (Å)</text></g></svg><div id="tb"></div><svg class="abs" style="left:0;top:0" width="786" height="23" viewBox="6 28 786 23"><path d="M11.5 32.5h7l3.5 3.5v8h-10.5z" fill="#fff" stroke="#7c8fb5"/><path d="M18.5 32.5v3.5h3.5" fill="#e8eef8" stroke="#7c8fb5"/><path d="M11.200 30.600v6M8.200 33.600h6M9.100 31.500l4.200 4.200M13.300 31.500l-4.200 4.200" stroke="#e8541c" stroke-width=".8"/><circle cx="11.200" cy="33.600" r="1.100" fill="#f7d36a"/><path d="M29.5 43.5v-8h4l1 1.5h6v6.5z" fill="#f5d67a" stroke="#b8902c"/><path d="M29.5 43.5l2.5-5.5h10.5l-2.5 5.5z" fill="#fbe9a5" stroke="#b8902c"/><path d="M36 33.5c2-2 4.500-2 6 0" fill="none" stroke="#3b62b5" stroke-width="1.3"/><path d="M43 31.500v3.500h-3.500z" fill="#3b62b5"/><path d="M50.5 32.500h11l1 1v10h-12z" fill="#4d4cc0" stroke="#2c2b8a"/><rect x="53" y="33" width="7" height="4.500" fill="#e9ecf7"/><rect x="53.500" y="39.500" width="6" height="4" fill="#23224f"/><rect x="57" y="40.300" width="1.800" height="2.600" fill="#e9ecf7"/><path d="M73 36l1.500-4.500h6l1.500 4.500z" fill="#eef3fb" stroke="#9aa6c0" stroke-width=".8"/><path d="M70.500 37.500q0-1.500 1.500-1.500h10q1.500 0 1.500 1.500v4.500h-13z" fill="#d6d6d6" stroke="#8a8a8a" stroke-width=".8"/><path d="M72 42h10v2.500h-10z" fill="#bcbcbc" stroke="#808080" stroke-width=".8"/><rect x="80" y="38.500" width="2" height="1.200" fill="#3fae3f"/><path d="M101.500 32v11l2.600-2.400 1.900 4 1.700-.8-1.900-3.900h3.500z" fill="#fff" stroke="#000" stroke-width="1"/><path d="M132.0 38.800l6 5.200" stroke="#e69a2e" stroke-width="2.600" stroke-linecap="round"/><circle cx="128.8" cy="35.600" r="4.300" fill="#eef4fd" stroke="#9fb3dd" stroke-width="1.300"/><path d="M126.6 35.600h4.400" stroke="#2a4fb0" stroke-width="1.300"/><path d="M128.8 33.400v4.400" stroke="#2a4fb0" stroke-width="1.300"/><path d="M152.8 38.800l6 5.200" stroke="#e69a2e" stroke-width="2.600" stroke-linecap="round"/><circle cx="149.6" cy="35.600" r="4.300" fill="#eef4fd" stroke="#9fb3dd" stroke-width="1.300"/><path d="M147.4 35.600h4.400" stroke="#2a4fb0" stroke-width="1.300"/><path d="M168.500 44.500c-.5-2-2.500-3.500-3-5.500 1-.8 2 .2 2.800 1.200l.2-6c.9-.9 1.700-.4 1.800.4l.4-2.600c.9-.8 1.800-.3 1.900.5l.5 2.100c.8-1.700 1.900-.9 1.900-.2l.3 3.600c.7-1.800 1.900-1.100 1.900-.3 0 2.800-.4 4.800-1.400 6.800z" fill="#fbe3cc" stroke="#3a5fb8" stroke-width=".9"/><path d="M190.600 32.700a5.600 5.600 0 1 1-3.400 7.300" fill="none" stroke="#1d2d6b" stroke-width="2"/><path d="M185.600 33.400l5.400-3 .3 5.600z" fill="#1d2d6b"/><path d="M190.400 36.600l2.200-.9 2.300.9v2.900l-2.300 1-2.200-1z M190.400 36.600l2.200 1 2.300-1M192.600 37.600v2.900" fill="#fff" stroke="#1d2d6b" stroke-width=".7"/><rect x="210.500" y="31.500" width="8" height="8" fill="#efe9a0" stroke="#9c9440"/><path d="M212 34h5M212 36h5" stroke="#b8b060" stroke-width=".8"/><path d="M209.400 36.800v7M206 40.300h7" stroke="#000" stroke-width="1.600"/><path d="M205.500 32c.5 4 1.500 6 3 8M211 42.500c2 1.500 4 2 7 2" fill="none" stroke="#2a2ae0" stroke-width="1" stroke-dasharray="2 1.300"/><path d="M240.500 31.800l-6.500 7.200" stroke="#4a5fb0" stroke-width="2.600" stroke-linecap="round"/><path d="M240 32.400l-5 5.600" stroke="#dfe6fa" stroke-width=".9"/><path d="M234.300 38.200l-2.200 1c-2.300 1-3.100 3-4.600 4.800 2.600.3 5.200-.4 6.400-2.300l1.600-2.200z" fill="#3a3a3a"/><rect x="235.600" y="39.700" width="4.400" height="4.300" fill="#f00"/><path d="M247 37h5l-2.500 2.800z" fill="#222"/><rect x="266.500" y="31" width="9" height="8" fill="#dfe8f6" stroke="#3c558f"/><rect x="264.500" y="33" width="9" height="8" fill="#eef3fb" stroke="#3c558f"/><rect x="264.500" y="33" width="9" height="2" fill="#3c558f"/><rect x="265.500" y="40" width="6" height="3.600" rx="1.800" fill="none" stroke="#5d6f9a" stroke-width="1.300"/><rect x="270.500" y="40" width="6.500" height="3.600" rx="1.800" fill="none" stroke="#5d6f9a" stroke-width="1.300"/><defs><linearGradient id="cbg" x1="0" y1="0" x2="0" y2="1"><stop offset="0" stop-color="#7f8fe8"/><stop offset=".35" stop-color="#8fd0f0"/><stop offset=".6" stop-color="#b9eebc"/><stop offset=".8" stop-color="#f6e98f"/><stop offset="1" stop-color="#f3a58f"/></linearGradient></defs><rect x="294.200" y="31.300" width="8.600" height="12.400" fill="url(#cbg)" stroke="#1f2f75" stroke-width="1.200"/><rect x="311.600" y="31.300" width="13.200" height="12.400" fill="#fff" stroke="#1f2f75" stroke-width="1.200"/><rect x="313.500" y="33.600" width="4" height="3" fill="#e8393c"/><rect x="313.500" y="38.600" width="4" height="3" fill="#3c4fe0"/><path d="M319 35.100h4M319 40.100h4" stroke="#222" stroke-width="1.400"/><rect x="341.500" y="33.500" width="9.500" height="9" fill="#9c9c9c" stroke="#b9b9b9"/><rect x="359.600" y="31.800" width="12.400" height="11.600" fill="#fff" stroke="#1f2f75" stroke-width="1.300"/><path d="M359.600 33h12.400" stroke="#1f2f75" stroke-width="2"/><path d="M362 33v9M369.600 33v9" stroke="#5b6ba8" stroke-width="1"/><path d="M360 42.300h11.600" stroke="#d9c98a" stroke-width="1.600"/><path d="M90.0 31v17" stroke="#a3a3a3" stroke-width="1.2"/><path d="M91.1 31v17" stroke="#fbfbfb" stroke-width="1"/><path d="M117.5 31v17" stroke="#a3a3a3" stroke-width="1.2"/><path d="M118.6 31v17" stroke="#fbfbfb" stroke-width="1"/><path d="M256.7 31v17" stroke="#a3a3a3" stroke-width="1.2"/><path d="M257.8 31v17" stroke="#fbfbfb" stroke-width="1"/><path d="M284.6 31v17" stroke="#a3a3a3" stroke-width="1.2"/><path d="M285.7 31v17" stroke="#fbfbfb" stroke-width="1"/><path d="M332.0 31v17" stroke="#a3a3a3" stroke-width="1.2"/><path d="M333.1 31v17" stroke="#fbfbfb" stroke-width="1"/><path d="M782.300 36.800l4.200 4.200M787 37.800v3.700h-3.700" stroke="#000" stroke-width="1.400" fill="none"/></svg><div class="panel" style="position:absolute;left:22.00px;top:39.00px;width:110.00px;height:147.00px;"></div><div class="t" style="left:48.80px;top:35.10px;background:#f0f0f0;padding:0 2px;">Atom Types</div><div class="t" style="left:-23.40px;top:55.60px;width:200px;text-align:center;">Atom A</div><div class="pop" style="position:absolute;left:35.00px;top:70.50px;width:87.50px;height:18.30px;"><i></i></div><div class="t" style="left:38.60px;top:74.80px;">fluorine</div><div class="t" style="left:-23.40px;top:99.90px;width:200px;text-align:center;">Atom B</div><div class="pop" style="position:absolute;left:33.50px;top:114.50px;width:87.50px;height:18.30px;"><i></i></div><div class="t" style="left:37.10px;top:118.80px;">hydrogen</div><div class="t" style="left:-23.40px;top:144.60px;width:200px;text-align:center;">Atom C</div><div class="pop" style="position:absolute;left:34.50px;top:158.00px;width:87.50px;height:18.30px;"><i></i></div><div class="t" style="left:38.10px;top:162.30px;">hydrogen</div><div class="" style="position:absolute;left:142.50px;top:38.00px;width:90.20px;height:44.80px;border:1px solid #3c7fb1;border-radius:3px;background:linear-gradient(#eaf6fd 0,#d9f0fc 48%,#bee6fd 52%,#a7d9f5 100%);box-shadow:inset 0 0 0 1px rgba(255,255,255,.55)"><div class="abs" style="left:2px;top:2px;right:2px;bottom:2px;border:1px dotted #444"></div></div><div class="t" style="left:87.40px;top:55.70px;width:200px;text-align:center;">Update</div><div class="panel" style="position:absolute;left:142.50px;top:95.00px;width:93.50px;height:35.50px;"></div><div class="t" style="left:146.60px;top:91.10px;background:#f0f0f0;padding:0 2px;">Delta Value</div><div class="edit" style="position:absolute;left:151.00px;top:102.50px;width:78.50px;height:20.90px;"></div><div class="t" style="left:90.25px;top:107.70px;width:200px;text-align:center;">0.424</div><div class="" style="position:absolute;left:143.00px;top:137.00px;width:93.00px;height:51.00px;background:#fff"></div><div class="panel" style="position:absolute;left:143.50px;top:143.50px;width:92.00px;height:43.50px;"></div><div class="t" style="left:147.80px;top:139.60px;background:#fff;padding:0 2px;">Calculation Type</div><div class="" style="position:absolute;left:152.00px;top:168.00px;width:58.00px;height:12.00px;background:#f0f0f0"></div><div class="radio" style="position:absolute;left:152.60px;top:153.30px;width:11.00px;height:11.00px;"><div class="abs" style="left:1.500px;top:1.500px;width:6px;height:6px;border-radius:50%;background:radial-gradient(circle at 40% 35%,#9fd6f5,#175fb8 50%,#0a2a70)"></div></div><div class="radio" style="position:absolute;left:152.60px;top:168.90px;width:11.00px;height:11.00px;"></div><div class="t" style="left:168.10px;top:153.40px;">Dynamics</div><div class="t" style="left:168.10px;top:168.80px;">MEP</div><div class="panel" style="position:absolute;left:24.00px;top:201.50px;width:107.30px;height:32.00px;"></div><div class="t" style="left:27.80px;top:197.60px;background:#f0f0f0;padding:0 2px;">Steps</div><div class="edit" style="position:absolute;left:36.00px;top:207.80px;width:79.20px;height:15.20px;"></div><div class="t" style="left:-24.40px;top:210.15px;width:200px;text-align:center;">1000</div><div class="panel" style="position:absolute;left:142.50px;top:201.50px;width:96.00px;height:33.00px;"></div><div class="t" style="left:146.30px;top:197.60px;background:#f0f0f0;padding:0 2px;">Cutoff (Kcal/ mol)</div><div class="edit" style="position:absolute;left:154.90px;top:208.70px;width:73.30px;height:18.10px;"></div><div class="t" style="left:91.55px;top:212.40px;width:200px;text-align:center;">-20</div><div class="" style="position:absolute;left:32.00px;top:251.00px;width:203.00px;height:19.00px;background:#e6e6e6;border-bottom:1px solid #646464"></div><div class="" style="position:absolute;left:32.00px;top:251.00px;width:14.00px;height:19.00px;background:#f0f0f0;border-left:1px solid #fff;border-top:1px solid #fff;border-right:1px solid #5a5a5a;border-bottom:1px solid #646464"></div><div class="" style="position:absolute;left:206.00px;top:251.00px;width:14.00px;height:19.00px;background:#f0f0f0;border-left:1px solid #fff;border-top:1px solid #fff;border-right:1px solid #5a5a5a;border-bottom:1px solid #646464"></div><div class="" style="position:absolute;left:221.00px;top:251.00px;width:14.00px;height:19.00px;background:#f0f0f0;border-left:1px solid #fff;border-top:1px solid #fff;border-right:1px solid #5a5a5a;border-bottom:1px solid #646464"></div><svg class="abs" style="left:32.0px;top:251.0px" width="203" height="18"><path d="M8 5.300v6l-3.300-3z M193.500 5.300v6l3.300-3z" fill="#000"/></svg><div class="panel" style="position:absolute;left:21.50px;top:244.60px;width:217.50px;height:36.90px;"></div><div class="t" style="left:26.00px;top:240.70px;background:#f0f0f0;padding:0 2px;">Collision Angle</div><div class="panel" style="position:absolute;left:21.20px;top:298.60px;width:218.60px;height:95.30px;"></div><div class="t" style="left:94.80px;top:294.70px;background:#f0f0f0;padding:0 2px;">Initial Conditions</div><div class="t" style="left:-24.80px;top:305.80px;width:200px;text-align:center;">AB Distance (A)</div><div class="t" style="left:86.50px;top:305.80px;width:200px;text-align:center;">AB Momentum</div><div class="t" style="left:-25.90px;top:350.40px;width:200px;text-align:center;">BC Distance (A)</div><div class="t" style="left:84.00px;top:350.40px;width:200px;text-align:center;">BC Momentum</div><div class="edit" style="position:absolute;left:31.20px;top:323.00px;width:88.60px;height:16.50px;"></div><div class="t" style="left:-24.50px;top:326.50px;width:200px;text-align:center;">1.9</div><div class="edit" style="position:absolute;left:139.60px;top:323.00px;width:88.60px;height:16.50px;"></div><div class="t" style="left:83.90px;top:326.50px;width:200px;text-align:center;">-0.5</div><div class="edit" style="position:absolute;left:30.40px;top:366.80px;width:88.60px;height:16.60px;"></div><div class="t" style="left:-25.30px;top:370.00px;width:200px;text-align:center;">0.74</div><div class="edit" style="position:absolute;left:139.60px;top:366.80px;width:88.60px;height:16.60px;"></div><div class="t" style="left:83.90px;top:370.00px;width:200px;text-align:center;">0.5</div><div class="" style="position:absolute;left:20.50px;top:406.80px;width:216.80px;height:111.80px;background:#fff;border:1px solid #828790;overflow:hidden"><div class="abs" style="left:0;top:12.40px;width:199.80px;height:11.800px;background:#a0a0a0"></div><div class="abs" style="left:0;top:0;width:200.10px;height:97.90px;overflow:hidden"><div class="t" style="left:1.50px;top:1.50px">Contour Plot</div><div class="t" style="left:1.50px;top:13.77px">Surface Plot</div><div class="t" style="left:1.50px;top:26.04px">Internuclear Distances vs Time</div><div class="t" style="left:1.50px;top:38.31px">Potential Energy vs Time</div><div class="t" style="left:1.50px;top:50.58px">Kinetic Energy vs Time</div><div class="t" style="left:1.50px;top:62.85px">Internuclear Velocities vs Internuclear Distance</div><div class="t" style="left:1.50px;top:75.12px">Internuclear Accelerations vs Internuclear Distance</div><div class="t" style="left:1.50px;top:87.39px">Internuclear Momenta vs Internuclear Distance</div></div><div class="abs" style="left:201.00px;top:0;width:14px;height:97.90px;background:#f0f0f0"></div><div class="abs" style="left:201.50px;top:16.00px;width:12.800px;height:40.500px;border:1px solid #979797;border-radius:2.500px;background:linear-gradient(90deg,#f5f5f5,#e6e6e6 45%,#d2d2d2 55%,#cacaca)"></div><svg class="abs" style="left:201.00px;top:0" width="14" height="99"><path d="M3.800 9.500l3.400-3.400 3.400 3.400z M3.800 87.800l3.400 3.400 3.400-3.400z" fill="#333"/><path d="M4.500 33.500h5.500M4.500 35.500h5.500M4.500 37.500h5.500" stroke="#555" stroke-width="1"/></svg><div class="abs" style="left:0;top:97.90px;width:215.30px;height:12px;background:#f0f0f0"></div><div class="abs" style="left:15.90px;top:98.20px;width:151.90px;height:11.500px;border:1px solid #979797;border-radius:2.500px;background:linear-gradient(#f5f5f5,#e6e6e6 45%,#d2d2d2 55%,#cacaca)"></div><svg class="abs" style="left:0;top:97.90px" width="216" height="12"><path d="M10.500 2.600v6.800l-3.400-3.400z M192 2.600v6.800l3.400-3.400z" fill="#333"/><path d="M89.500 3.500v5M91.500 3.500v5M93.500 3.500v5" stroke="#555" stroke-width="1"/></svg></div></div></div></body></html>
